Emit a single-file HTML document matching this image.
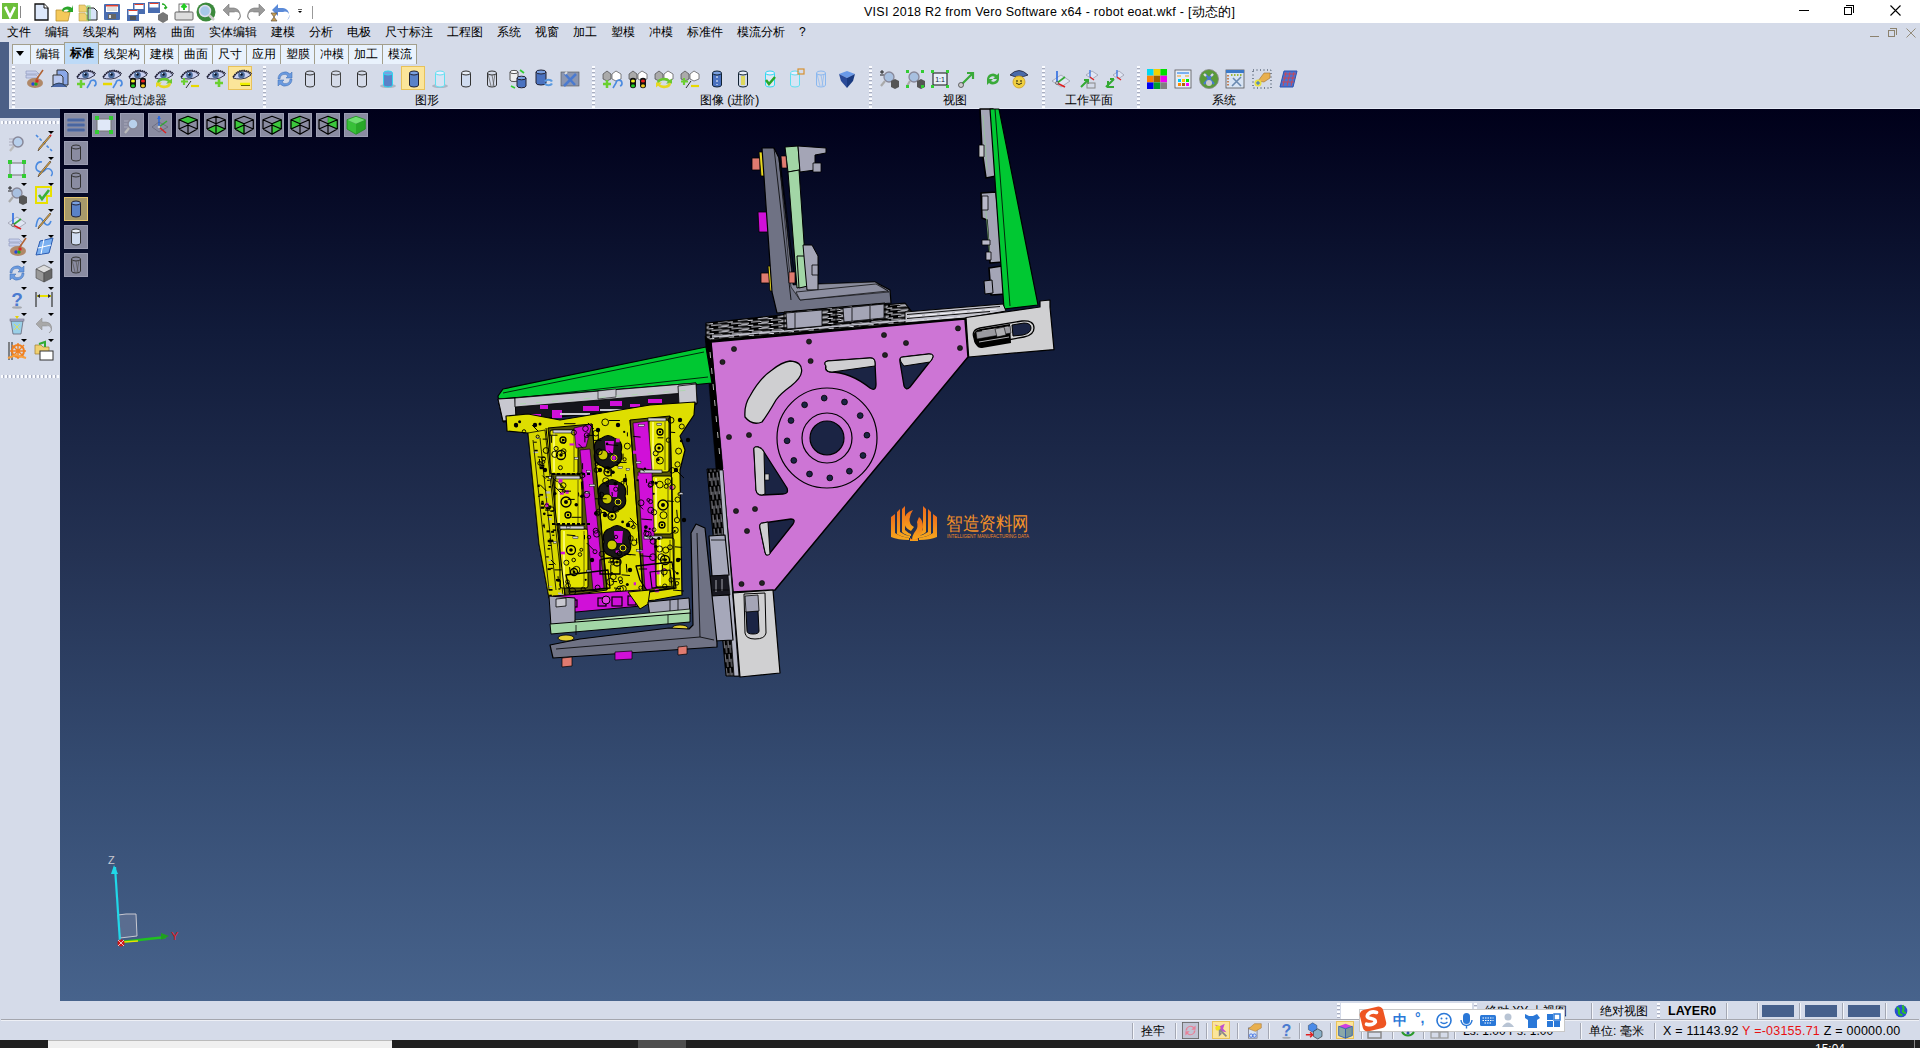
<!DOCTYPE html><html><head><meta charset="utf-8"><style>
*{margin:0;padding:0;box-sizing:border-box}
html,body{width:1920px;height:1048px;overflow:hidden;background:#d5dbe9;font-family:"Liberation Sans",sans-serif;font-size:12px;color:#000}
.a{position:absolute;overflow:visible}
.t{position:absolute;white-space:nowrap;line-height:1;font-weight:500}
.tab{position:absolute;top:44px;height:20px;border:1px solid #a39f8c;border-bottom:none;background:#e9f2fd;font-size:12px;line-height:18px;text-align:center;white-space:nowrap;font-weight:500}
.tab.act{top:42px;height:22px;background:#bddaf7;line-height:20px;font-weight:bold}
.vsep{position:absolute;width:3px;background:repeating-linear-gradient(#fbfcff 0 2px,#a9aec0 2px 3px,#d6dcea 3px 4px)}
.hsep{position:absolute;height:3px;background:repeating-linear-gradient(90deg,#fbfcff 0 2px,#a9aec0 2px 3px,#d6dcea 3px 4px)}
.btn{position:absolute;width:24px;height:24px;background:#8a8ca1;border:1px solid #9c9eb3}
.sl{position:absolute;width:2px;background:#a4a8b4;border-right:1px solid #f4f6fb}
</style></head><body>
<div class="a" style="left:0;top:0;width:1920px;height:23px;background:#fff"></div>
<svg class="a" style="left:2px;top:3px" width="16" height="16" viewBox="0 0 20 20"><rect x="0" y="0" width="20" height="20" fill="#6cbf3a"/><path d="M4 5l6 12 6-12" stroke="#fff" stroke-width="3.4" fill="none"/><circle cx="5" cy="6" r="1.6" fill="#fff"/></svg>
<div class="a" style="left:20px;top:6px;width:1px;height:12px;background:#888"></div>
<svg class="a" style="left:31px;top:2px" width="20" height="20" viewBox="0 0 20 20"><path d="M4 2h9l4 4v12H4z" fill="#dde8fb" stroke="#111" stroke-width="1.3"/><path d="M13 2v4h4" fill="#fff" stroke="#111"/></svg>
<svg class="a" style="left:54px;top:2px" width="20" height="20" viewBox="0 0 20 20"><path d="M2 8h6l2 2h6l-2 9H2z" fill="#f5c95a" stroke="#b89030" stroke-width=".8"/><path d="M8 8a6 5 0 0 1 10-2l1-3v7h-6l2-2a4 3 0 0 0-6 2z" fill="#2aa52a"/></svg>
<svg class="a" style="left:78px;top:2px" width="20" height="20" viewBox="0 0 20 20"><path d="M1 3h6l1 2h3v5H1z" fill="#f0d070" stroke="#b8a050" stroke-width=".6"/><path d="M1 11h6l1 2h3v6H1z" fill="#f0d070" stroke="#b8a050" stroke-width=".6"/><path d="M10 6h6l3 3v9H10z" fill="#d8e4f8" stroke="#222" stroke-width="1"/><rect x="9" y="4" width="3" height="14" fill="none" stroke="#6c6" stroke-width=".8"/></svg>
<svg class="a" style="left:102px;top:2px" width="20" height="20" viewBox="0 0 20 20"><rect x="2" y="2" width="16" height="16" rx="1" fill="#4a6db0"/><rect x="4" y="3" width="12" height="7" fill="#fff"/><rect x="4" y="3" width="12" height="1.5" fill="#e04030"/><path d="M5 6h10M5 8h10" stroke="#999" stroke-width=".6"/><rect x="6" y="12" width="8" height="5" fill="#666"/><rect x="7" y="13" width="2" height="3" fill="#ddd"/></svg>
<svg class="a" style="left:126px;top:2px" width="20" height="20" viewBox="0 0 20 20"><rect x="7" y="1" width="12" height="11" fill="#4a6db0"/><rect x="8.5" y="2" width="9" height="5" fill="#fff"/><rect x="1" y="7" width="12" height="12" fill="#4a6db0"/><rect x="2.5" y="8" width="9" height="5" fill="#fff"/><rect x="8.5" y="2" width="9" height="1" fill="#e04030"/><rect x="2.5" y="8" width="9" height="1" fill="#e04030"/><rect x="4" y="14" width="6" height="4" fill="#555"/></svg>
<svg class="a" style="left:148px;top:2px" width="20" height="20" viewBox="0 0 20 20"><rect x="0" y="0" width="12" height="11" fill="#4a6db0"/><rect x="1.5" y="1" width="9" height="4.5" fill="#fff"/><rect x="1.5" y="1" width="9" height="1" fill="#e04030"/><path d="M10 13l5-3 5 3v5l-5 3-5-3z" fill="#777"/><path d="M14 2a4 4 0 0 1 4 4l1-1M18 6l-2 0" stroke="#2a2" stroke-width="1.5" fill="none"/></svg>
<svg class="a" style="left:174px;top:2px" width="20" height="20" viewBox="0 0 20 20"><rect x="5" y="2" width="10" height="8" fill="#fff" stroke="#555" stroke-width=".8"/><path d="M10 3v5M7.5 5.5l2.5-3 2.5 3" stroke="#2c2" stroke-width="2" fill="none"/><rect x="1" y="10" width="18" height="8" rx="1" fill="#ddd" stroke="#666" stroke-width="1"/></svg>
<svg class="a" style="left:196px;top:2px" width="20" height="20" viewBox="0 0 20 20"><circle cx="10" cy="10" r="9.5" fill="#3c8a3c"/><circle cx="9" cy="9" r="5.5" fill="#a8c8e8" stroke="#dde" stroke-width="1.5"/><path d="M13 13l5 5" stroke="#ccc" stroke-width="2.5"/></svg>
<svg class="a" style="left:222px;top:2px" width="20" height="20" viewBox="0 0 20 20"><path d="M16 18a7 7 0 0 0-4-12H7V2L1 8l6 6v-4h5a4 4 0 0 1 4 8" fill="#9a9a9a" stroke="#777" stroke-width=".6"/></svg>
<svg class="a" style="left:246px;top:2px" width="20" height="20" viewBox="0 0 20 20"><path d="M4 18a7 7 0 0 1 4-12h5V2l6 6-6 6v-4H8a4 4 0 0 0-4 8" fill="#9a9a9a" stroke="#777" stroke-width=".6"/></svg>
<svg class="a" style="left:269px;top:2px" width="20" height="20" viewBox="0 0 20 20"><path d="M18 18a7 7 0 0 0-4-12H9V2L3 8l6 6v-4h5a4 4 0 0 1 4 8" fill="#5a8ad8"/><path d="M2 11h6l-3 4 3 4H2l3-4z" fill="#c8a050" stroke="#654" stroke-width=".7"/></svg>
<svg class="a" style="left:295px;top:3px" width="10" height="16" viewBox="0 0 20 20"><path d="M6 7h8" stroke="#000" stroke-width="1.2"/><path d="M6 10h8l-4 4z" fill="#000"/></svg>
<div class="a" style="left:312px;top:6px;width:1px;height:13px;background:#999"></div>
<div class="t title" style="left:864px;top:6px;font-size:12.5px;color:#000;letter-spacing:0.27px">VISI 2018 R2 from Vero Software x64 - robot eoat.wkf - [动态的]</div>
<div class="a" style="left:1799px;top:10px;width:10px;height:1px;background:#000"></div>
<div class="a" style="left:1844px;top:7px;width:8px;height:8px;border:1px solid #000"></div>
<div class="a" style="left:1846px;top:5px;width:8px;height:8px;border-top:1px solid #000;border-right:1px solid #000"></div>
<svg class="a" style="left:1890px;top:5px" width="11" height="11" viewBox="0 0 11 11"><path d="M0.5 0.5l10 10M10.5 0.5l-10 10" stroke="#000" stroke-width="1.1"/></svg>
<div class="a" style="left:0;top:23px;width:1920px;height:86px;background:#d5dbe9"></div>
<div class="t" style="left:7px;top:26px;font-size:12px;color:#000">文件</div>
<div class="t" style="left:45px;top:26px;font-size:12px;color:#000">编辑</div>
<div class="t" style="left:83px;top:26px;font-size:12px;color:#000">线架构</div>
<div class="t" style="left:133px;top:26px;font-size:12px;color:#000">网格</div>
<div class="t" style="left:171px;top:26px;font-size:12px;color:#000">曲面</div>
<div class="t" style="left:209px;top:26px;font-size:12px;color:#000">实体编辑</div>
<div class="t" style="left:271px;top:26px;font-size:12px;color:#000">建模</div>
<div class="t" style="left:309px;top:26px;font-size:12px;color:#000">分析</div>
<div class="t" style="left:347px;top:26px;font-size:12px;color:#000">电极</div>
<div class="t" style="left:385px;top:26px;font-size:12px;color:#000">尺寸标注</div>
<div class="t" style="left:447px;top:26px;font-size:12px;color:#000">工程图</div>
<div class="t" style="left:497px;top:26px;font-size:12px;color:#000">系统</div>
<div class="t" style="left:535px;top:26px;font-size:12px;color:#000">视窗</div>
<div class="t" style="left:573px;top:26px;font-size:12px;color:#000">加工</div>
<div class="t" style="left:611px;top:26px;font-size:12px;color:#000">塑模</div>
<div class="t" style="left:649px;top:26px;font-size:12px;color:#000">冲模</div>
<div class="t" style="left:687px;top:26px;font-size:12px;color:#000">标准件</div>
<div class="t" style="left:737px;top:26px;font-size:12px;color:#000">模流分析</div>
<div class="t" style="left:799px;top:26px;font-size:12px;color:#000">?</div>
<div class="a" style="left:1870px;top:36px;width:9px;height:1px;background:#8c826e"></div>
<div class="a" style="left:1888px;top:30px;width:7px;height:7px;border:1px solid #8c826e"></div>
<div class="a" style="left:1890px;top:28px;width:7px;height:7px;border-top:1px solid #8c826e;border-right:1px solid #8c826e"></div>
<svg class="a" style="left:1906px;top:28px" width="10" height="10" viewBox="0 0 10 10"><path d="M0.5 0.5l9 9M9.5 0.5l-9 9" stroke="#8c826e" stroke-width=".9"/></svg>
<div class="a" style="left:0;top:42px;width:9px;height:76px;background:#4b5f86"></div>
<div class="a" style="left:0;top:108px;width:60px;height:10px;background:#4b5f86"></div>
<div class="tab" style="left:12px;width:19px"></div>
<div class="tab" style="left:30px;width:35px">编辑</div>
<div class="tab act" style="left:64px;width:35px">标准</div>
<div class="tab" style="left:98px;width:47px">线架构</div>
<div class="tab" style="left:144px;width:35px">建模</div>
<div class="tab" style="left:178px;width:35px">曲面</div>
<div class="tab" style="left:212px;width:35px">尺寸</div>
<div class="tab" style="left:246px;width:35px">应用</div>
<div class="tab" style="left:280px;width:35px">塑膜</div>
<div class="tab" style="left:314px;width:35px">冲模</div>
<div class="tab" style="left:348px;width:35px">加工</div>
<div class="tab" style="left:382px;width:35px">模流</div>
<svg class="a" style="left:15px;top:50px" width="10" height="8" viewBox="0 0 10 8"><path d="M1 1h8L5 6z" fill="#000"/></svg>
<div class="a" style="left:9px;top:64px;width:1911px;height:44px;background:#d5dbe9"></div>
<div class="a" style="left:9px;top:108px;width:1911px;height:1px;background:#e6ebf7"></div>
<div class="vsep" style="left:12px;top:66px;height:42px"></div>
<div class="vsep" style="left:263px;top:66px;height:42px"></div>
<div class="vsep" style="left:592px;top:66px;height:42px"></div>
<div class="vsep" style="left:869px;top:66px;height:42px"></div>
<div class="vsep" style="left:1042px;top:66px;height:42px"></div>
<div class="vsep" style="left:1137px;top:66px;height:42px"></div>
<div class="a" style="left:228px;top:66px;width:24px;height:24px;background:#fbe59a;border:1px solid #e8c25a"></div>
<div class="a" style="left:401px;top:66px;width:24px;height:24px;background:#fbe59a;border:1px solid #e8c25a"></div>
<svg class="a" style="left:24px;top:69px" width="20" height="20" viewBox="0 0 20 20"><path d="M2 2h10l3 3H2zM2 6h10l3 3H2z" fill="#c8d0ec" stroke="#8890b8" stroke-width=".6"/><ellipse cx="11" cy="14" rx="8" ry="5" fill="#b08868"/><circle cx="9" cy="15" r="1.7" fill="#2244dd"/><circle cx="12" cy="15" r="1.7" fill="#22aa22"/><circle cx="13" cy="12" r="1.7" fill="#dd2222"/><path d="M19 1l-7 10" stroke="#b06030" stroke-width="1.5"/></svg>
<svg class="a" style="left:50px;top:69px" width="20" height="20" viewBox="0 0 20 20"><path d="M7 1h8l3 3v12H7z" fill="#8aa8e8" stroke="#333" stroke-width="1"/><path d="M3 6h8l2 2v8H3z" fill="#b8c8f0" stroke="#333" stroke-width="1"/><path d="M1 18q8-8 16 0" fill="#4a68a8" stroke="#234" stroke-width=".8"/></svg>
<svg class="a" style="left:76px;top:69px" width="20" height="20" viewBox="0 0 20 20"><path d="M1 9Q5 2 11 2Q16 2 19 6Q14 10 9 10Q4 10 1 9Z" fill="#c8d0f0" stroke="#2a2a40" stroke-width=".9"/><circle cx="9.5" cy="6" r="3.3" fill="#4a6a9a"/><circle cx="9.5" cy="5.5" r="1.2" fill="#0a1020"/><circle cx="8.5" cy="4.5" r=".7" fill="#cde"/><path d="M1 8Q6 1 12 1.5Q17 2 19.5 5" stroke="#1a1a30" stroke-width="1.6" fill="none" stroke-dasharray="1.5 .6"/></svg>
<svg class="a" style="left:76px;top:69px" width="20" height="20" viewBox="0 0 20 20"><path d="M5 11v8M1 15h8" stroke="#6ad030" stroke-width="2.5"/></svg>
<svg class="a" style="left:76px;top:69px" width="20" height="20" viewBox="0 0 20 20"><path d="M11 19l3-5a3 3 0 1 1 4 3" stroke="#4a8ae0" stroke-width="1.6" fill="none"/></svg>
<svg class="a" style="left:102px;top:69px" width="20" height="20" viewBox="0 0 20 20"><path d="M1 9Q5 2 11 2Q16 2 19 6Q14 10 9 10Q4 10 1 9Z" fill="#c8d0f0" stroke="#2a2a40" stroke-width=".9"/><circle cx="9.5" cy="6" r="3.3" fill="#4a6a9a"/><circle cx="9.5" cy="5.5" r="1.2" fill="#0a1020"/><circle cx="8.5" cy="4.5" r=".7" fill="#cde"/><path d="M1 8Q6 1 12 1.5Q17 2 19.5 5" stroke="#1a1a30" stroke-width="1.6" fill="none" stroke-dasharray="1.5 .6"/></svg>
<svg class="a" style="left:102px;top:69px" width="20" height="20" viewBox="0 0 20 20"><path d="M1 15h9" stroke="#e8d800" stroke-width="2.5"/></svg>
<svg class="a" style="left:102px;top:69px" width="20" height="20" viewBox="0 0 20 20"><path d="M11 19l3-5a3 3 0 1 1 4 3" stroke="#4a8ae0" stroke-width="1.6" fill="none"/></svg>
<svg class="a" style="left:128px;top:69px" width="20" height="20" viewBox="0 0 20 20"><path d="M1 9Q5 2 11 2Q16 2 19 6Q14 10 9 10Q4 10 1 9Z" fill="#c8d0f0" stroke="#2a2a40" stroke-width=".9"/><circle cx="9.5" cy="6" r="3.3" fill="#4a6a9a"/><circle cx="9.5" cy="5.5" r="1.2" fill="#0a1020"/><circle cx="8.5" cy="4.5" r=".7" fill="#cde"/><path d="M1 8Q6 1 12 1.5Q17 2 19.5 5" stroke="#1a1a30" stroke-width="1.6" fill="none" stroke-dasharray="1.5 .6"/></svg>
<svg class="a" style="left:128px;top:69px" width="20" height="20" viewBox="0 0 20 20"><g transform="translate(0,4) scale(1,.8)"><rect x="2" y="6" width="6" height="13" rx="3" fill="#111"/><circle cx="5" cy="10" r="2" fill="#ee2"/><circle cx="5" cy="16" r="2" fill="#2c2"/><rect x="12" y="6" width="6" height="13" rx="3" fill="#111"/><circle cx="15" cy="10" r="2" fill="#e22"/><circle cx="15" cy="16" r="2" fill="#ec2"/></g></svg>
<svg class="a" style="left:154px;top:69px" width="20" height="20" viewBox="0 0 20 20"><path d="M1 9Q5 2 11 2Q16 2 19 6Q14 10 9 10Q4 10 1 9Z" fill="#c8d0f0" stroke="#2a2a40" stroke-width=".9"/><circle cx="9.5" cy="6" r="3.3" fill="#4a6a9a"/><circle cx="9.5" cy="5.5" r="1.2" fill="#0a1020"/><circle cx="8.5" cy="4.5" r=".7" fill="#cde"/><path d="M1 8Q6 1 12 1.5Q17 2 19.5 5" stroke="#1a1a30" stroke-width="1.6" fill="none" stroke-dasharray="1.5 .6"/></svg>
<svg class="a" style="left:154px;top:69px" width="20" height="20" viewBox="0 0 20 20"><g transform="translate(0,4) scale(1,.8)"><path d="M3 12a7 6 0 0 1 13-3l2-2v6h-6l2-2a5 4 0 0 0-9 2z" fill="#6ac830"/><path d="M17 13a7 6 0 0 1-13 3l-2 2v-6h6l-2 2a5 4 0 0 0 9-2z" fill="#e8d820"/></g></svg>
<svg class="a" style="left:180px;top:69px" width="20" height="20" viewBox="0 0 20 20"><path d="M1 9Q5 2 11 2Q16 2 19 6Q14 10 9 10Q4 10 1 9Z" fill="#c8d0f0" stroke="#2a2a40" stroke-width=".9"/><circle cx="9.5" cy="6" r="3.3" fill="#4a6a9a"/><circle cx="9.5" cy="5.5" r="1.2" fill="#0a1020"/><circle cx="8.5" cy="4.5" r=".7" fill="#cde"/><path d="M1 8Q6 1 12 1.5Q17 2 19.5 5" stroke="#1a1a30" stroke-width="1.6" fill="none" stroke-dasharray="1.5 .6"/></svg>
<svg class="a" style="left:180px;top:69px" width="20" height="20" viewBox="0 0 20 20"><path d="M4 9v7M1 12.5h7" stroke="#6ad030" stroke-width="2.2"/><path d="M6 19l5-7" stroke="#333" stroke-width="1"/><path d="M11 17h8" stroke="#e8d800" stroke-width="2.2"/></svg>
<svg class="a" style="left:206px;top:69px" width="20" height="20" viewBox="0 0 20 20"><path d="M1 9Q5 2 11 2Q16 2 19 6Q14 10 9 10Q4 10 1 9Z" fill="#c8d0f0" stroke="#2a2a40" stroke-width=".9"/><circle cx="9.5" cy="6" r="3.3" fill="#4a6a9a"/><circle cx="9.5" cy="5.5" r="1.2" fill="#0a1020"/><circle cx="8.5" cy="4.5" r=".7" fill="#cde"/><path d="M1 8Q6 1 12 1.5Q17 2 19.5 5" stroke="#1a1a30" stroke-width="1.6" fill="none" stroke-dasharray="1.5 .6"/></svg>
<svg class="a" style="left:206px;top:69px" width="20" height="20" viewBox="0 0 20 20"><path d="M13 10v8M9 14h8" stroke="#6ad030" stroke-width="2.6"/></svg>
<svg class="a" style="left:232px;top:69px" width="20" height="20" viewBox="0 0 20 20"><path d="M1 9Q5 2 11 2Q16 2 19 6Q14 10 9 10Q4 10 1 9Z" fill="#c8d0f0" stroke="#2a2a40" stroke-width=".9"/><circle cx="9.5" cy="6" r="3.3" fill="#4a6a9a"/><circle cx="9.5" cy="5.5" r="1.2" fill="#0a1020"/><circle cx="8.5" cy="4.5" r=".7" fill="#cde"/><path d="M1 8Q6 1 12 1.5Q17 2 19.5 5" stroke="#1a1a30" stroke-width="1.6" fill="none" stroke-dasharray="1.5 .6"/></svg>
<svg class="a" style="left:232px;top:69px" width="20" height="20" viewBox="0 0 20 20"><path d="M8 15h10" stroke="#f0f000" stroke-width="2.6"/><path d="M9 16.5h9" stroke="#6a6a00" stroke-width="1"/></svg>
<svg class="a" style="left:275px;top:69px" width="20" height="20" viewBox="0 0 20 20"><path d="M3 10a7 7 0 0 1 12-5l2-2v6h-6l2-2a4.5 4.5 0 0 0-8 3z" fill="#6a9ae0" stroke="#3a6ab0" stroke-width=".5"/><path d="M17 10a7 7 0 0 1-12 5l-2 2v-6h6l-2 2a4.5 4.5 0 0 0 8-3z" fill="#6a9ae0" stroke="#3a6ab0" stroke-width=".5"/></svg>
<svg class="a" style="left:300px;top:69px" width="20" height="20" viewBox="0 0 20 20"><path d="M5.5 4v12a4.5 2 0 0 0 9 0V4" fill="none" stroke="#333" stroke-width="1"/><ellipse cx="10" cy="4" rx="4.5" ry="2" fill="none" stroke="#333" stroke-width="1"/></svg>
<svg class="a" style="left:326px;top:69px" width="20" height="20" viewBox="0 0 20 20"><path d="M5.5 4v12a4.5 2 0 0 0 9 0V4" fill="none" stroke="#444" stroke-width="1"/><ellipse cx="10" cy="4" rx="4.5" ry="2" fill="none" stroke="#444" stroke-width="1"/></svg>
<svg class="a" style="left:352px;top:69px" width="20" height="20" viewBox="0 0 20 20"><path d="M5.5 4v12a4.5 2 0 0 0 9 0V4" fill="none" stroke="#333" stroke-width="1"/><ellipse cx="10" cy="4" rx="4.5" ry="2" fill="none" stroke="#333" stroke-width="1"/></svg>
<svg class="a" style="left:378px;top:69px" width="20" height="20" viewBox="0 0 20 20"><ellipse cx="10" cy="17" rx="8" ry="2" fill="#8890a0" opacity=".5"/><path d="M5.5 4v12a4.5 2 0 0 0 9 0V4" fill="#5a82c8" stroke="#30d8f0" stroke-width="1"/><ellipse cx="10" cy="4" rx="4.5" ry="2" fill="#7aa0e0" stroke="#30d8f0" stroke-width="1"/></svg>
<svg class="a" style="left:404px;top:69px" width="20" height="20" viewBox="0 0 20 20"><path d="M5.5 4v12a4.5 2 0 0 0 9 0V4" fill="#5a82c8" stroke="#223" stroke-width="1"/><ellipse cx="10" cy="4" rx="4.5" ry="2" fill="#7aa0e0" stroke="#223" stroke-width="1"/></svg>
<svg class="a" style="left:430px;top:69px" width="20" height="20" viewBox="0 0 20 20"><ellipse cx="10" cy="17" rx="8" ry="2" fill="#8890a0" opacity=".5"/><path d="M5.5 4v12a4.5 2 0 0 0 9 0V4" fill="#d8e4f4" stroke="#60e0f0" stroke-width="1"/><ellipse cx="10" cy="4" rx="4.5" ry="2" fill="#eef" stroke="#60e0f0" stroke-width="1"/></svg>
<svg class="a" style="left:456px;top:69px" width="20" height="20" viewBox="0 0 20 20"><path d="M5.5 4v12a4.5 2 0 0 0 9 0V4" fill="#d0dcf0" stroke="#333" stroke-width="1"/><ellipse cx="10" cy="4" rx="4.5" ry="2" fill="#e8eef8" stroke="#333" stroke-width="1"/></svg>
<svg class="a" style="left:482px;top:69px" width="20" height="20" viewBox="0 0 20 20"><path d="M5.5 4v12a4.5 2 0 0 0 9 0V4" fill="none" stroke="#333" stroke-width="1"/><ellipse cx="10" cy="4" rx="4.5" ry="2" fill="none" stroke="#333" stroke-width="1"/><path d="M6 5l3 12M10 6l2 11M13 5l-2 12" stroke="#555" stroke-width=".7"/></svg>
<svg class="a" style="left:508px;top:69px" width="20" height="20" viewBox="0 0 20 20"><path d="M2 3v8a4 1.6 0 0 0 8 0V3" fill="#eee" stroke="#555"/><ellipse cx="6" cy="3" rx="4" ry="1.6" fill="#fff" stroke="#555"/><path d="M9 9v8a4.5 1.8 0 0 0 9 0V9" fill="#4a72c0" stroke="#223"/><ellipse cx="13.5" cy="9" rx="4.5" ry="1.8" fill="#7aa0e0" stroke="#223"/><path d="M12 1l4 3M3 17l4 2" stroke="#3c3" stroke-width="1.8"/></svg>
<svg class="a" style="left:534px;top:69px" width="20" height="20" viewBox="0 0 20 20"><path d="M2 3v11a5 2 0 0 0 10 0V3" fill="#4a72c0" stroke="#223"/><ellipse cx="7" cy="3" rx="5" ry="2" fill="#7aa0e0" stroke="#223"/><path d="M10 12a5 4 0 0 1 9 0l-2 1a3 3 0 0 0-5 0zM19 15a5 4 0 0 1-9 0l2-1a3 3 0 0 0 5 0z" fill="#5a9ae0"/></svg>
<svg class="a" style="left:560px;top:69px" width="20" height="20" viewBox="0 0 20 20"><rect x="1" y="3" width="18" height="14" fill="#8b96b0" stroke="#555" stroke-width=".6"/><path d="M4 17l12-12M15 16L5 5" stroke="#4a7ad0" stroke-width="2.5"/><path d="M5 5l2-2" stroke="#ddd" stroke-width="2"/></svg>
<svg class="a" style="left:602px;top:69px" width="20" height="20" viewBox="0 0 20 20"><path d="M1 5l4-3 4 3v5l-4 2-4-2z" fill="#aaa" stroke="#333" stroke-width=".6"/><path d="M10 5l4-3 5 3v5l-5 2-4-2z" fill="#fff" stroke="#333" stroke-width=".6"/></svg>
<svg class="a" style="left:602px;top:69px" width="20" height="20" viewBox="0 0 20 20"><path d="M5 11v8M1 15h8" stroke="#6ad030" stroke-width="2.5"/></svg>
<svg class="a" style="left:602px;top:69px" width="20" height="20" viewBox="0 0 20 20"><path d="M11 19l3-5a3 3 0 1 1 4 3" stroke="#4a8ae0" stroke-width="1.6" fill="none"/></svg>
<svg class="a" style="left:628px;top:69px" width="20" height="20" viewBox="0 0 20 20"><path d="M1 5l4-3 4 3v5l-4 2-4-2z" fill="#aaa" stroke="#333" stroke-width=".6"/><path d="M10 5l4-3 5 3v5l-5 2-4-2z" fill="#fff" stroke="#333" stroke-width=".6"/></svg>
<svg class="a" style="left:628px;top:69px" width="20" height="20" viewBox="0 0 20 20"><g transform="translate(0,4) scale(1,.8)"><rect x="2" y="6" width="6" height="13" rx="3" fill="#111"/><circle cx="5" cy="10" r="2" fill="#ee2"/><circle cx="5" cy="16" r="2" fill="#2c2"/><rect x="12" y="6" width="6" height="13" rx="3" fill="#111"/><circle cx="15" cy="10" r="2" fill="#e22"/><circle cx="15" cy="16" r="2" fill="#ec2"/></g></svg>
<svg class="a" style="left:654px;top:69px" width="20" height="20" viewBox="0 0 20 20"><path d="M1 5l4-3 4 3v5l-4 2-4-2z" fill="#aaa" stroke="#333" stroke-width=".6"/><path d="M10 5l4-3 5 3v5l-5 2-4-2z" fill="#fff" stroke="#333" stroke-width=".6"/></svg>
<svg class="a" style="left:654px;top:69px" width="20" height="20" viewBox="0 0 20 20"><g transform="translate(0,4) scale(1,.8)"><path d="M3 12a7 6 0 0 1 13-3l2-2v6h-6l2-2a5 4 0 0 0-9 2z" fill="#6ac830"/><path d="M17 13a7 6 0 0 1-13 3l-2 2v-6h6l-2 2a5 4 0 0 0 9-2z" fill="#e8d820"/></g></svg>
<svg class="a" style="left:680px;top:69px" width="20" height="20" viewBox="0 0 20 20"><path d="M1 5l4-3 4 3v5l-4 2-4-2z" fill="#aaa" stroke="#333" stroke-width=".6"/><path d="M10 5l4-3 5 3v5l-5 2-4-2z" fill="#fff" stroke="#333" stroke-width=".6"/></svg>
<svg class="a" style="left:680px;top:69px" width="20" height="20" viewBox="0 0 20 20"><path d="M4 9v7M1 12.5h7" stroke="#6ad030" stroke-width="2.2"/><path d="M6 19l5-7" stroke="#333" stroke-width="1"/><path d="M11 17h8" stroke="#e8d800" stroke-width="2.2"/></svg>
<svg class="a" style="left:707px;top:69px" width="20" height="20" viewBox="0 0 20 20"><path d="M5.5 4v12a4.5 2 0 0 0 9 0V4" fill="#4a72c0" stroke="#123" stroke-width="1"/><ellipse cx="10" cy="4" rx="4.5" ry="2" fill="#7aa0e0" stroke="#123" stroke-width="1"/><path d="M10 7v9" stroke="#fff" stroke-width="1" stroke-dasharray="2 2"/></svg>
<svg class="a" style="left:733px;top:69px" width="20" height="20" viewBox="0 0 20 20"><path d="M5.5 4v12a4.5 2 0 0 0 9 0V4" fill="#d0d8e8" stroke="#123" stroke-width="1"/><ellipse cx="10" cy="4" rx="4.5" ry="2" fill="#e8eef8" stroke="#123" stroke-width="1"/><path d="M9 7v9M11 7v9" stroke="#e8d800" stroke-width="1.2"/></svg>
<svg class="a" style="left:760px;top:69px" width="20" height="20" viewBox="0 0 20 20"><path d="M5.5 4v12a4.5 2 0 0 0 9 0V4" fill="#e0e8f4" stroke="#30d8f0" stroke-width="1"/><ellipse cx="10" cy="4" rx="4.5" ry="2" fill="#eef" stroke="#30d8f0" stroke-width="1"/><path d="M6 11l3 4 6-7" stroke="#2aa82a" stroke-width="2.5" fill="none"/></svg>
<svg class="a" style="left:785px;top:69px" width="20" height="20" viewBox="0 0 20 20"><path d="M5.5 4v12a4.5 2 0 0 0 9 0V4" fill="#d8e4f4" stroke="#60e0f0" stroke-width="1"/><ellipse cx="10" cy="4" rx="4.5" ry="2" fill="#eef" stroke="#60e0f0" stroke-width="1"/><rect x="13" y="0" width="6" height="5" fill="none" stroke="#d89030" stroke-width="1.2"/></svg>
<svg class="a" style="left:811px;top:69px" width="20" height="20" viewBox="0 0 20 20"><path d="M5.5 4v12a4.5 2 0 0 0 9 0V4" fill="none" stroke="#8ab8f0" stroke-width="1"/><ellipse cx="10" cy="4" rx="4.5" ry="2" fill="none" stroke="#8ab8f0" stroke-width="1"/><path d="M6 5l3 12M10 6l2 11M13 5l-2 12" stroke="#8ab8f0" stroke-width=".7"/></svg>
<svg class="a" style="left:837px;top:69px" width="20" height="20" viewBox="0 0 20 20"><path d="M2 5l8-3 8 3-8 4z" fill="#6a9ae8"/><path d="M2 5l8 4v10L4 12z" fill="#2a4a98"/><path d="M18 5l-8 4v10l6-7z" fill="#1a3a80"/></svg>
<svg class="a" style="left:879px;top:69px" width="20" height="20" viewBox="0 0 20 20"><path d="M1 3h4M3 1v4M1 6h4" stroke="#111" stroke-width=".9"/><circle cx="10" cy="8" r="5" fill="#a8c0e0" stroke="#889" stroke-width="1.3"/><path d="M6 12l-4 5" stroke="#aaa" stroke-width="2.2"/><path d="M12 12l4-2 4 2v6l-4 2-4-2z" fill="#555"/></svg>
<svg class="a" style="left:905px;top:69px" width="20" height="20" viewBox="0 0 20 20"><circle cx="9" cy="8" r="5" fill="#a8c0e0" stroke="#889" stroke-width="1.3"/><path d="M5 12l-3 5" stroke="#aaa" stroke-width="2.2"/><path d="M12 12l4-2 4 2v6l-4 2-4-2z" fill="#555"/><path d="M1 1h3v3H1zM16 1h3v3h-3zM1 16h3v3H1zM16 16h3v3h-3z" fill="#3c3"/></svg>
<svg class="a" style="left:930px;top:69px" width="20" height="20" viewBox="0 0 20 20"><rect x="3" y="4" width="14" height="12" fill="#e8eef8" stroke="#111" stroke-width="1"/><text x="10" y="13" font-size="7" text-anchor="middle" fill="#123" font-family="Liberation Sans">1:1</text><path d="M1 1h3v3H1zM16 1h3v3h-3zM1 16h3v3H1zM16 16h3v3h-3z" fill="#3c3"/></svg>
<svg class="a" style="left:957px;top:69px" width="20" height="20" viewBox="0 0 20 20"><path d="M4 16l12-12M10 4h6v6" stroke="#3aaa3a" stroke-width="2.2" fill="none"/><circle cx="4" cy="16" r="2.5" fill="#ccc" stroke="#333" stroke-width=".7"/></svg>
<svg class="a" style="left:983px;top:69px" width="20" height="20" viewBox="0 0 20 20"><path d="M4 10a6 6 0 0 1 10-4l2-2v6h-6l2-2a4 4 0 0 0-6 2z" fill="#3aaa3a"/><path d="M16 10a6 6 0 0 1-10 4l-2 2v-6h6l-2 2a4 4 0 0 0 6-2z" fill="#3aaa3a"/></svg>
<svg class="a" style="left:1009px;top:69px" width="20" height="20" viewBox="0 0 20 20"><path d="M1 6q9-9 18 0q-9 4-18 0z" fill="#4a6aa8" stroke="#223" stroke-width=".8"/><circle cx="10" cy="13" r="6" fill="#f0d040" stroke="#d0a020" stroke-width=".8"/><circle cx="8" cy="12" r=".8"/><circle cx="12" cy="12" r=".8"/><path d="M7 14q3 3 6 0" stroke="#000" stroke-width=".8" fill="none"/></svg>
<svg class="a" style="left:1051px;top:69px" width="20" height="20" viewBox="0 0 20 20"><path d="M1 12l9-6 9 6-9 6z" fill="#e0e6f4" stroke="#889" stroke-width=".6"/><path d="M6 14V2" stroke="#2a6ae0" stroke-width="1.6"/><path d="M6 14l8-6" stroke="#3a3" stroke-width="1.6"/><path d="M6 14l8 4" stroke="#d22" stroke-width="1.6"/><circle cx="6" cy="14" r="1.5" fill="#ccc" stroke="#333" stroke-width=".5"/></svg>
<svg class="a" style="left:1078px;top:69px" width="20" height="20" viewBox="0 0 20 20"><path d="M8 6l6-4 6 4-6 4z" fill="#e0e6f4" stroke="#889" stroke-width=".6"/><path d="M12 8V1" stroke="#2a6ae0" stroke-width="1.2"/><path d="M12 8l4 3" stroke="#d22" stroke-width="1.2"/><path d="M3 18l7-7M6 11h4v4" stroke="#3a3" stroke-width="2" fill="none"/><rect x="9" y="14" width="8" height="5" fill="none" stroke="#888" stroke-width="1"/></svg>
<svg class="a" style="left:1104px;top:69px" width="20" height="20" viewBox="0 0 20 20"><path d="M9 6l6-4 5 4-6 4z" fill="#e0e6f4" stroke="#889" stroke-width=".6"/><path d="M13 8V1" stroke="#2a6ae0" stroke-width="1.2"/><path d="M13 8l4 3" stroke="#d22" stroke-width="1.2"/><path d="M2 18l8-8M4 12v6h6M10 10h-4" stroke="#3a3" stroke-width="2" fill="none"/></svg>
<svg class="a" style="left:1147px;top:69px" width="20" height="20" viewBox="0 0 20 20"><rect x="0" y="0" width="6.6" height="6.6" fill="#00d8f0"/><rect x="6.7" y="0" width="6.6" height="6.6" fill="#f0d000"/><rect x="13.4" y="0" width="6.6" height="6.6" fill="#00e000"/><rect x="0" y="6.7" width="6.6" height="6.6" fill="#ff8000"/><rect x="6.7" y="6.7" width="6.6" height="6.6" fill="#a06000"/><rect x="13.4" y="6.7" width="6.6" height="6.6" fill="#f000f0"/><rect x="0" y="13.4" width="6.6" height="6.6" fill="#0000f0"/><rect x="6.7" y="13.4" width="6.6" height="6.6" fill="#00a030"/><rect x="13.4" y="13.4" width="6.6" height="6.6" fill="#808080"/></svg>
<svg class="a" style="left:1173px;top:69px" width="20" height="20" viewBox="0 0 20 20"><rect x="2" y="1" width="16" height="18" fill="#e8eef8" stroke="#555" stroke-width=".8"/><rect x="4" y="3" width="12" height="2" fill="#7ab0f0"/><path d="M4 7h4M12 7h4" stroke="#f0a020" stroke-width="1"/><rect x="5" y="10" width="3" height="3" fill="#0cf"/><rect x="9" y="10" width="3" height="3" fill="#fc0"/><rect x="13" y="10" width="3" height="3" fill="#0e0"/><rect x="5" y="14" width="3" height="3" fill="#f80"/><rect x="9" y="14" width="3" height="3" fill="#a60"/><rect x="13" y="14" width="3" height="3" fill="#f0f"/></svg>
<svg class="a" style="left:1199px;top:69px" width="20" height="20" viewBox="0 0 20 20"><circle cx="10" cy="10" r="9.5" fill="#5a9a3a" stroke="#888" stroke-width=".8"/><path d="M5 15l9-10M6 5l9 10" stroke="#4a7ad0" stroke-width="2.2"/><path d="M5 5l2 2M14 5l-2 2" stroke="#ddd" stroke-width="2.2"/><ellipse cx="10" cy="14" rx="3" ry="3" fill="#ccc"/></svg>
<svg class="a" style="left:1225px;top:69px" width="20" height="20" viewBox="0 0 20 20"><rect x="1" y="1" width="18" height="18" fill="#d8e4f4" stroke="#555" stroke-width=".8"/><rect x="1" y="1" width="18" height="3" fill="#3a78c8"/><path d="M3 6v12" stroke="#c06020" stroke-width="1.5" stroke-dasharray="1.5 1.5"/><path d="M6 6h12" stroke="#8a0" stroke-width="1.5" stroke-dasharray="1.5 1.5"/><path d="M7 17l9-9M8 9l8 8" stroke="#6a8ab0" stroke-width="1.6"/></svg>
<svg class="a" style="left:1252px;top:69px" width="20" height="20" viewBox="0 0 20 20"><path d="M1 1h18v18H1z" fill="none" stroke="#234" stroke-width="1" stroke-dasharray="1 2.5"/><path d="M6 12l6-8h6v5l-6 4z" fill="#e8b050" stroke="#a07030" stroke-width=".6"/><circle cx="6" cy="14" r="3.5" fill="#e8e040"/><path d="M6 12v4M4 14h4" stroke="#2a6ae0" stroke-width="1"/></svg>
<svg class="a" style="left:1278px;top:69px" width="20" height="20" viewBox="0 0 20 20"><path d="M2 18l4-16h13l-4 16z" fill="#4a72d0" stroke="#2a52b0" stroke-width="1"/><path d="M4 13h12M5 9h12M6 5h12M8 3l-3 14M12 3l-3 14M16 3l-3 14" stroke="#e04040" stroke-width=".8"/></svg>
<div class="t" style="left:104px;top:94px;font-size:12px;color:#000">属性/过滤器</div>
<div class="t" style="left:415px;top:94px;font-size:12px;color:#000">图形</div>
<div class="t" style="left:700px;top:94px;font-size:12px;color:#000">图像 (进阶)</div>
<div class="t" style="left:943px;top:94px;font-size:12px;color:#000">视图</div>
<div class="t" style="left:1065px;top:94px;font-size:12px;color:#000">工作平面</div>
<div class="t" style="left:1212px;top:94px;font-size:12px;color:#000">系统</div>
<div class="a" style="left:0;top:118px;width:60px;height:883px;background:#d5dbe9"></div>
<div class="hsep" style="left:1px;top:121px;width:58px"></div>
<div class="hsep" style="left:1px;top:375px;width:58px"></div>
<svg class="a" style="left:7px;top:133px" width="20" height="20" viewBox="0 0 20 20"><path d="M2 6h5M2 9h5M2 12h5" stroke="#aab" stroke-width="1"/><circle cx="11" cy="9" r="5" fill="#b8d0ec" stroke="#889" stroke-width="1.5"/><path d="M7 13l-4 5" stroke="#bbb" stroke-width="2.2"/></svg>
<svg class="a" style="left:34px;top:133px" width="20" height="20" viewBox="0 0 20 20"><path d="M2 2l16 16" stroke="#4a8ae0" stroke-width="1.6" stroke-dasharray="3 2"/><path d="M17 3L6 16l-2 2 1-3L16 2z" fill="#e8b040" stroke="#543" stroke-width=".7"/><path d="M16 2l1 1" stroke="#d22" stroke-width="2"/></svg>
<svg class="a" style="left:48px;top:131px" width="6" height="4" viewBox="0 0 6 4"><path d="M0 0h6L3 3z" fill="#000"/></svg>
<svg class="a" style="left:7px;top:159px" width="20" height="20" viewBox="0 0 20 20"><rect x="3" y="4" width="14" height="12" fill="#e0e8f8" stroke="#777" stroke-width="1"/><path d="M1 1h4v4H1zM15 1h4v4h-4zM1 15h4v4H1zM15 15h4v4h-4z" fill="#3c3"/></svg>
<svg class="a" style="left:34px;top:159px" width="20" height="20" viewBox="0 0 20 20"><path d="M8 3a5 5 0 1 0 3 8a4 4 0 1 1 6 6" stroke="#4a8ae0" stroke-width="1.6" fill="none"/><path d="M17 3L6 16l-2 2 1-3L16 2z" fill="#e8b040" stroke="#543" stroke-width=".7"/></svg>
<svg class="a" style="left:48px;top:157px" width="6" height="4" viewBox="0 0 6 4"><path d="M0 0h6L3 3z" fill="#000"/></svg>
<svg class="a" style="left:7px;top:185px" width="20" height="20" viewBox="0 0 20 20"><path d="M1 3h4M3 1v4M1 6h4" stroke="#111" stroke-width=".9"/><circle cx="10" cy="8" r="5" fill="#a8c0e0" stroke="#889" stroke-width="1.3"/><path d="M6 12l-4 5" stroke="#aaa" stroke-width="2.2"/><path d="M12 12l4-2 4 2v6l-4 2-4-2z" fill="#555"/></svg>
<svg class="a" style="left:34px;top:185px" width="20" height="20" viewBox="0 0 20 20"><path d="M2 2h15v9h-4v7H2z" fill="none" stroke="#e8e000" stroke-width="2"/><path d="M5 10l3 4 7-9" stroke="#3ab03a" stroke-width="2.6" fill="none"/></svg>
<svg class="a" style="left:21px;top:183px" width="6" height="4" viewBox="0 0 6 4"><path d="M0 0h6L3 3z" fill="#000"/></svg>
<svg class="a" style="left:48px;top:183px" width="6" height="4" viewBox="0 0 6 4"><path d="M0 0h6L3 3z" fill="#000"/></svg>
<svg class="a" style="left:7px;top:211px" width="20" height="20" viewBox="0 0 20 20"><path d="M1 12l9-6 9 6-9 6z" fill="#e0e6f4" stroke="#889" stroke-width=".6"/><path d="M6 14V2" stroke="#2a6ae0" stroke-width="1.6"/><path d="M6 14l8-6" stroke="#3a3" stroke-width="1.6"/><path d="M6 14l8 4" stroke="#d22" stroke-width="1.6"/><circle cx="6" cy="14" r="1.5" fill="#ccc" stroke="#333" stroke-width=".5"/></svg>
<svg class="a" style="left:34px;top:211px" width="20" height="20" viewBox="0 0 20 20"><path d="M2 16q2-14 7-6t8 0" stroke="#4a8ae0" stroke-width="1.6" fill="none"/><path d="M17 3L6 16l-2 2 1-3L16 2z" fill="#e8b040" stroke="#543" stroke-width=".7"/></svg>
<svg class="a" style="left:21px;top:209px" width="6" height="4" viewBox="0 0 6 4"><path d="M0 0h6L3 3z" fill="#000"/></svg>
<svg class="a" style="left:48px;top:209px" width="6" height="4" viewBox="0 0 6 4"><path d="M0 0h6L3 3z" fill="#000"/></svg>
<svg class="a" style="left:7px;top:237px" width="20" height="20" viewBox="0 0 20 20"><path d="M2 2h10l3 3H2zM2 6h10l3 3H2z" fill="#c8d0ec" stroke="#8890b8" stroke-width=".6"/><ellipse cx="11" cy="14" rx="8" ry="5" fill="#b08868"/><circle cx="9" cy="15" r="1.7" fill="#2244dd"/><circle cx="12" cy="15" r="1.7" fill="#22aa22"/><circle cx="13" cy="12" r="1.7" fill="#dd2222"/><path d="M19 1l-7 10" stroke="#b06030" stroke-width="1.5"/></svg>
<svg class="a" style="left:34px;top:237px" width="20" height="20" viewBox="0 0 20 20"><path d="M2 18l4-14 13-3-4 15z" fill="#7ab0f0" stroke="#2a5ab0" stroke-width="1"/><path d="M4 11l13-3M10 2l-3 15" stroke="#fff" stroke-width="1"/></svg>
<svg class="a" style="left:21px;top:235px" width="6" height="4" viewBox="0 0 6 4"><path d="M0 0h6L3 3z" fill="#000"/></svg>
<svg class="a" style="left:48px;top:235px" width="6" height="4" viewBox="0 0 6 4"><path d="M0 0h6L3 3z" fill="#000"/></svg>
<svg class="a" style="left:7px;top:263px" width="20" height="20" viewBox="0 0 20 20"><path d="M3 10a7 7 0 0 1 12-5l2-2v6h-6l2-2a4.5 4.5 0 0 0-8 3z" fill="#6a9ae0" stroke="#3a6ab0" stroke-width=".5"/><path d="M17 10a7 7 0 0 1-12 5l-2 2v-6h6l-2 2a4.5 4.5 0 0 0 8-3z" fill="#6a9ae0" stroke="#3a6ab0" stroke-width=".5"/></svg>
<svg class="a" style="left:34px;top:263px" width="20" height="20" viewBox="0 0 20 20"><path d="M2 6l8-4 8 4-8 4z" fill="#ddd" stroke="#444" stroke-width=".6"/><path d="M2 6l8 4v9l-8-4z" fill="#999" stroke="#444" stroke-width=".6"/><path d="M18 6l-8 4v9l8-4z" fill="#666" stroke="#444" stroke-width=".6"/></svg>
<svg class="a" style="left:21px;top:261px" width="6" height="4" viewBox="0 0 6 4"><path d="M0 0h6L3 3z" fill="#000"/></svg>
<svg class="a" style="left:48px;top:261px" width="6" height="4" viewBox="0 0 6 4"><path d="M0 0h6L3 3z" fill="#000"/></svg>
<svg class="a" style="left:7px;top:289px" width="20" height="20" viewBox="0 0 20 20"><text x="10" y="17" font-size="19" font-weight="bold" text-anchor="middle" fill="#4a7ad0" font-family="Liberation Sans">?</text><ellipse cx="10" cy="18.5" rx="5" ry="1.2" fill="#888" opacity=".6"/></svg>
<svg class="a" style="left:34px;top:289px" width="20" height="20" viewBox="0 0 20 20"><path d="M2 3v15M18 3v15" stroke="#333" stroke-width="1.2"/><path d="M3 7h14" stroke="#e8e000" stroke-width="2"/><path d="M3 7l3-2v4zM17 7l-3-2v4z" fill="#333"/></svg>
<svg class="a" style="left:21px;top:287px" width="6" height="4" viewBox="0 0 6 4"><path d="M0 0h6L3 3z" fill="#000"/></svg>
<svg class="a" style="left:48px;top:287px" width="6" height="4" viewBox="0 0 6 4"><path d="M0 0h6L3 3z" fill="#000"/></svg>
<svg class="a" style="left:7px;top:315px" width="20" height="20" viewBox="0 0 20 20"><path d="M4 6h12l-2 13H6z" fill="#9ad0e8" stroke="#667" stroke-width=".8"/><rect x="3" y="4" width="14" height="2" fill="#aac" stroke="#667" stroke-width=".5"/><path d="M8 1l2 3 2-3" fill="#e8d000"/><path d="M7 9l6 6M13 9l-6 6" stroke="#e8e040" stroke-width=".8"/></svg>
<svg class="a" style="left:34px;top:315px" width="20" height="20" viewBox="0 0 20 20"><path d="M15 18a6 6 0 0 0-3-11H8V3L2 9l6 6v-4h4a3 3 0 0 1 3 7" fill="#a8a8a8" stroke="#888" stroke-width=".5"/></svg>
<svg class="a" style="left:21px;top:313px" width="6" height="4" viewBox="0 0 6 4"><path d="M0 0h6L3 3z" fill="#000"/></svg>
<svg class="a" style="left:48px;top:313px" width="6" height="4" viewBox="0 0 6 4"><path d="M0 0h6L3 3z" fill="#000"/></svg>
<svg class="a" style="left:7px;top:341px" width="20" height="20" viewBox="0 0 20 20"><path d="M2 1v18M5 1v18" stroke="#444" stroke-width="1.2"/><circle cx="11" cy="10" r="6" fill="none" stroke="#f08020" stroke-width="2"/><path d="M11 2v16M3 10h16M5 4l12 12M17 4L5 16" stroke="#f08020" stroke-width="1.4"/><path d="M1 17l8-3 10 3" stroke="#f8a040" stroke-width="2" fill="none"/></svg>
<svg class="a" style="left:34px;top:341px" width="20" height="20" viewBox="0 0 20 20"><path d="M1 4h6l2 2h6v7H1z" fill="#f0d070" stroke="#a08030" stroke-width=".7"/><path d="M5 3l6-2v5" stroke="#3a3" stroke-width="2" fill="none"/><rect x="6" y="10" width="13" height="9" fill="#fff" stroke="#333" stroke-width="1"/></svg>
<svg class="a" style="left:21px;top:339px" width="6" height="4" viewBox="0 0 6 4"><path d="M0 0h6L3 3z" fill="#000"/></svg>
<svg class="a" style="left:48px;top:339px" width="6" height="4" viewBox="0 0 6 4"><path d="M0 0h6L3 3z" fill="#000"/></svg>
<div class="a" style="left:60px;top:109px;width:1860px;height:892px;background:linear-gradient(#00001a 0%,#111b3a 25%,#243253 50%,#354c72 75%,#47638c 100%)"></div>
<svg class="a" style="left:0;top:0" width="1920" height="1048" viewBox="0 0 1920 1048"><defs>
<pattern id="hatch" width="20" height="5" patternUnits="userSpaceOnUse" patternTransform="rotate(-5)">
<rect width="20" height="5" fill="#000"/><path d="M0 1.2h9l2 1h7M7 3.7h9l2 .8h2M0 4.5h2" stroke="#e0e0ea" stroke-width="1" fill="none"/></pattern>
<pattern id="vhatch" width="4" height="14" patternUnits="userSpaceOnUse" patternTransform="rotate(-5)">
<rect width="4" height="14" fill="#000"/><path d="M1.2 1v8M3 6v8" stroke="#c8c8d4" stroke-width=".8"/></pattern>
</defs><polygon points="980,109 993,109 996,176 986,178 982,150" fill="#a4a5b6" stroke="#000" stroke-width="1.6" stroke-linejoin="round"/><path d="M983 115l4 55" stroke="#90c890" stroke-width=".7"/><path d="M979 145h5v12h-5z" fill="#c8c8d0" stroke="#000" stroke-width=".8"/><polygon points="981,193 996,192 1003,262 990,263 987,220 982,218" fill="#a4a5b6" stroke="#000" stroke-width="1.6" stroke-linejoin="round"/><path d="M985 200l5 58" stroke="#90c890" stroke-width=".7"/><path d="M982 196h6v14h-6zM982 240h8v5h-8zM986 252h5v8h-5z" fill="#b8b8c8" stroke="#000" stroke-width=".8"/><polygon points="989,268 1002,266 1006,294 991,295" fill="#a4a5b6" stroke="#000" stroke-width="1.6" stroke-linejoin="round"/><polygon points="984,281 992,280 993,293 985,294" fill="#a4a5b6" stroke="#000" stroke-width="1" stroke-linejoin="round"/><polygon points="990,109 999,109 1038,305 1004,309" fill="#00c832" stroke="#000" stroke-width="1.2" stroke-linejoin="round"/><path d="M995 109L1010 306" stroke="#000" stroke-width=".8"/><polygon points="752,158 760,158 760,170 752,170" fill="#e07b70" stroke="#000" stroke-width="0.8" stroke-linejoin="round"/><polygon points="759,152 764,152 766,176 761,176" fill="#e8d820" stroke="#000" stroke-width="0.8" stroke-linejoin="round"/><polygon points="758,212 768,212 769,232 759,232" fill="#d010d8" stroke="#000" stroke-width="0.8" stroke-linejoin="round"/><polygon points="761,273 770,273 770,283 761,283" fill="#e07b70" stroke="#000" stroke-width="0.8" stroke-linejoin="round"/><polygon points="768,266 773,266 775,291 770,291" fill="#e8d820" stroke="#000" stroke-width="0.8" stroke-linejoin="round"/><polygon points="762,148 774,148 779,158 793,285 875,282 890,290 891,303 777,313 772,292" fill="#6f7284" stroke="#000" stroke-width="1.2" stroke-linejoin="round"/><path d="M774 148L791 300M780 160L796 288" stroke="#000" stroke-width=".8" fill="none"/><polygon points="779,158 791,287 800,300 889,292 875,282 793,285" fill="#8a8c9c" stroke="#000" stroke-width="0.6" stroke-linejoin="round"/><polygon points="785,147 798,146 800,170 788,172" fill="#a2d6a6" stroke="#000" stroke-width="1" stroke-linejoin="round"/><polygon points="788,172 799,170 807,286 797,288" fill="#a2d6a6" stroke="#000" stroke-width="1" stroke-linejoin="round"/><polygon points="797,256 806,256 808,286 799,288" fill="#a2d6a6" stroke="#000" stroke-width="1" stroke-linejoin="round"/><polygon points="798,146 826,148 826,153 815,155 815,170 800,172" fill="#a4a5b6" stroke="#000" stroke-width="1" stroke-linejoin="round"/><polygon points="813,163 821,163 821,172 813,172" fill="#a4a5b6" stroke="#000" stroke-width="0.8" stroke-linejoin="round"/><polygon points="803,245 812,245 818,256 818,290 807,290" fill="#a4a5b6" stroke="#000" stroke-width="1" stroke-linejoin="round"/><polygon points="812,265 818,265 818,275 812,275" fill="#a4a5b6" stroke="#000" stroke-width="0.8" stroke-linejoin="round"/><polygon points="781,156 786,156 787,168 782,168" fill="#e07b70" stroke="#000" stroke-width="0.7" stroke-linejoin="round"/><polygon points="789,272 795,272 795,283 789,283" fill="#e07b70" stroke="#000" stroke-width="0.7" stroke-linejoin="round"/><polygon points="796,292 876,284 888,291 800,300" fill="#8c8ea0" stroke="#000" stroke-width="0.7" stroke-linejoin="round"/><polygon points="706,323 790,314 905,303 912,312 966,318 711,342 706,342" fill="url(#hatch)" stroke="#000" stroke-width="1.2" stroke-linejoin="round"/><polygon points="905,312 1003,304 1006,311 966,318 905,323" fill="#c4c4cc" stroke="#000" stroke-width="1" stroke-linejoin="round"/><path d="M907 314.5L1000 306.5M907 318.5L990 311.5" stroke="#111" stroke-width="1"/><path d="M910 316.5L998 309M912 320.5L960 316.5" stroke="#f4f4f8" stroke-width="1" stroke-dasharray="12 3"/><path d="M712 337L966 315" stroke="#c0c0cc" stroke-width="1.5"/><path d="M711 341L966 319" stroke="#000" stroke-width="2.5"/><polygon points="784,312 885,303 885,319 784,330" fill="url(#hatch)" stroke="#000" stroke-width="1" stroke-linejoin="round"/><polygon points="786,313 822,310 822,326 787,329" fill="#a4a5b6" stroke="#000" stroke-width="0.8" stroke-linejoin="round"/><polygon points="843,308 884,304 884,318 844,322" fill="#a4a5b6" stroke="#000" stroke-width="0.8" stroke-linejoin="round"/><path d="M795 313v16M836 309v15M852 308v14M870 306v14" stroke="#000" stroke-width=".8"/><polygon points="711,342 965,319 968,357 775,590 733,592" fill="#cd75d5" stroke="#000" stroke-width="1.5" stroke-linejoin="round"/><path d="M790 361Q803 362 801.5 372Q801 378 791 386Q780 394 776 400Q768 414 762 422Q752 426 745 417Q744 405 750 396Q760 378 772 370Q782 362 790 361Z" fill="#cfcfd1" stroke="#000" stroke-width="1.3"/><path d="M826 366Q823 362 828 361L870 358Q875 358 875 363L876 384Q876 392 870 388Q850 372 830 372Q824 371 826 366Z" fill="#1b2444" stroke="#000" stroke-width="1.3" stroke-linejoin="round"/><path d="M826 366Q823 362 828 361L870 358Q875 358 875 363L875 366L832 372Q825 372 826 366Z" fill="#cfcfd1" stroke="#000" stroke-width="1" stroke-linejoin="round"/><path d="M903 357L929 354Q935 354 932 359L910 387Q906 391 904 386L900 362Q899 357 903 357Z" fill="#1b2444" stroke="#000" stroke-width="1.3" stroke-linejoin="round"/><path d="M903 357L929 354Q935 354 932 359L930 362L904 366L901 362Q899 357 903 357Z" fill="#cfcfd1" stroke="#000" stroke-width="1" stroke-linejoin="round"/><path d="M754 451Q753 446 758 447Q762 448 764 452L787 488Q789 494 783 494L762 495Q757 495 756 490Z" fill="#1b2444" stroke="#000" stroke-width="1.3" stroke-linejoin="round"/><path d="M754 451Q753 446 758 447Q762 448 764 452L765 494L762 495Q757 495 756 490Z" fill="#cfcfd1" stroke="#000" stroke-width="1" stroke-linejoin="round"/><path d="M766 538L772 538L770 540Z" fill="#cfcfd1"/><rect x="765" y="474" width="4" height="6" fill="#cfcfd1" stroke="#000" stroke-width=".6"/><path d="M763 523L791 519Q796 519 793 524L770 553Q766 557 765 552L760 528Q759 523 763 523Z" fill="#1b2444" stroke="#000" stroke-width="1.3" stroke-linejoin="round"/><path d="M763 523L768 522L770 554Q766 557 765 552L760 528Q759 523 763 523Z" fill="#cfcfd1" stroke="#000" stroke-width="1" stroke-linejoin="round"/><circle cx="827" cy="438" r="50" fill="none" stroke="#000" stroke-width="1.2"/><circle cx="827" cy="438" r="25" fill="none" stroke="#000" stroke-width="1.2"/><circle cx="827" cy="438" r="17" fill="#1b2444" stroke="#000" stroke-width="1.2"/><circle cx="734" cy="349" r="2.6" fill="#222" stroke="#000" stroke-width=".5"/><circle cx="722.5" cy="362" r="2.6" fill="#222" stroke="#000" stroke-width=".5"/><circle cx="809" cy="341.6" r="2.6" fill="#222" stroke="#000" stroke-width=".5"/><circle cx="810.6" cy="361" r="2.6" fill="#222" stroke="#000" stroke-width=".5"/><circle cx="884" cy="335" r="2.6" fill="#222" stroke="#000" stroke-width=".5"/><circle cx="885" cy="355" r="2.6" fill="#222" stroke="#000" stroke-width=".5"/><circle cx="906" cy="343" r="2.6" fill="#222" stroke="#000" stroke-width=".5"/><circle cx="958" cy="328.4" r="2.6" fill="#222" stroke="#000" stroke-width=".5"/><circle cx="960" cy="348" r="2.6" fill="#222" stroke="#000" stroke-width=".5"/><circle cx="729" cy="437" r="2.6" fill="#222" stroke="#000" stroke-width=".5"/><circle cx="749" cy="435" r="2.6" fill="#222" stroke="#000" stroke-width=".5"/><circle cx="736" cy="511" r="2.6" fill="#222" stroke="#000" stroke-width=".5"/><circle cx="755" cy="509" r="2.6" fill="#222" stroke="#000" stroke-width=".5"/><circle cx="747" cy="531" r="2.6" fill="#222" stroke="#000" stroke-width=".5"/><circle cx="741.5" cy="584" r="2.6" fill="#222" stroke="#000" stroke-width=".5"/><circle cx="762" cy="583" r="2.6" fill="#222" stroke="#000" stroke-width=".5"/><circle cx="866.9" cy="435.2" r="2.9" fill="#1b2444" stroke="#000" stroke-width=".8"/><circle cx="863.0" cy="455.5" r="2.9" fill="#1b2444" stroke="#000" stroke-width=".8"/><circle cx="849.4" cy="471.2" r="2.9" fill="#1b2444" stroke="#000" stroke-width=".8"/><circle cx="829.8" cy="477.9" r="2.9" fill="#1b2444" stroke="#000" stroke-width=".8"/><circle cx="809.5" cy="474.0" r="2.9" fill="#1b2444" stroke="#000" stroke-width=".8"/><circle cx="793.8" cy="460.4" r="2.9" fill="#1b2444" stroke="#000" stroke-width=".8"/><circle cx="787.1" cy="440.8" r="2.9" fill="#1b2444" stroke="#000" stroke-width=".8"/><circle cx="791.0" cy="420.5" r="2.9" fill="#1b2444" stroke="#000" stroke-width=".8"/><circle cx="804.6" cy="404.8" r="2.9" fill="#1b2444" stroke="#000" stroke-width=".8"/><circle cx="824.2" cy="398.1" r="2.9" fill="#1b2444" stroke="#000" stroke-width=".8"/><circle cx="844.5" cy="402.0" r="2.9" fill="#1b2444" stroke="#000" stroke-width=".8"/><circle cx="860.2" cy="415.6" r="2.9" fill="#1b2444" stroke="#000" stroke-width=".8"/><polygon points="966,317.5 1040,307 1040,301 1050,300 1050,307 1054,349.6 968.7,357" fill="#d0d0d2" stroke="#000" stroke-width="1.2" stroke-linejoin="round"/><path d="M974 338q-3-8 6-10l42-7q12-1 12 7q0 7-10 9l-44 8q-5 1-6-7z" fill="#cfcfd1" stroke="#000" stroke-width="1.3"/><path d="M974 338q-2-7 6-9l30-5 1 19-29 5q-6 1-8-10z" fill="#000"/><path d="M1012 325l12-2q7 0 7 5q0 5-8 7l-10 1z" fill="#1b2444" stroke="#000" stroke-width="1"/><polygon points="976,332 1010,326 1011,333 977,339" fill="#9a9aa0" stroke="#000" stroke-width="0.5" stroke-linejoin="round"/><path d="M979 342L1009 337M982 331L1008 327" stroke="#b0b0b4" stroke-width="1"/><polygon points="995,329 1004,327 1006,335 997,337" fill="#b0b0b4" stroke="#000" stroke-width="0.6" stroke-linejoin="round"/><polygon points="705,336 711,341 723,469 716,469" fill="#000" stroke="#000" stroke-width="0.5" stroke-linejoin="round"/><path d="M710 352l.6 6M711.5 368l.6 6M713 384l.6 6M714.5 400l.6 6M716 416l.6 6M717.5 432l.6 6M719 448l.6 6" stroke="#ddd" stroke-width=".8"/><polygon points="707,469 721,469 733,592 740,676 726,676" fill="url(#vhatch)" stroke="#000" stroke-width="1" stroke-linejoin="round"/><path d="M697 535l6 100M704 532l9 106" stroke="#000" stroke-width=".7"/><path d="M700 532l8 100" stroke="#000" stroke-width=".7"/><polygon points="719,470 723,470 739,676 734,676" fill="#b4b6c6" stroke="#000" stroke-width="0.8" stroke-linejoin="round"/><polygon points="709,536 725,535 729,575 712,576" fill="#a6a8ba" stroke="#000" stroke-width="1.2" stroke-linejoin="round"/><polygon points="710,576 728,575 730,595 711,596" fill="#181820" stroke="#000" stroke-width="0.6" stroke-linejoin="round"/><path d="M716 580v12M722 579v12" stroke="#c8c8d0" stroke-width=".8"/><polygon points="711,596 729,595 733,640 714,641" fill="#a6a8ba" stroke="#000" stroke-width="1.2" stroke-linejoin="round"/><path d="M711 540h14M713 590h16" stroke="#000" stroke-width=".8"/><polygon points="733,593 773,590 780,673 740,677" fill="#d0d0d2" stroke="#000" stroke-width="1.2" stroke-linejoin="round"/><path d="M744 594l21-1 1 40q-1 6-11 6q-9 0-10-6z" fill="none" stroke="#000" stroke-width="1"/><path d="M746 611h12l1 20q0 3-6 3t-6-3z" fill="#1b2444" stroke="#000" stroke-width="1"/><polygon points="745,596 758,595 759,611 746,612" fill="#a4a5b6" stroke="#000" stroke-width="0.8" stroke-linejoin="round"/><polygon points="498,396 503,389 706,347 712,383 506,403 499,404" fill="#00c832" stroke="#000" stroke-width="1.2" stroke-linejoin="round"/><path d="M503 393L704 352M508 399L708 377" stroke="#000" stroke-width=".8"/><polygon points="498,399 696,383 697,404 515,421 503,422" fill="#15151c" stroke="#000" stroke-width="1" stroke-linejoin="round"/><polygon points="498,399 515,398 516,420 503,421" fill="#c8c8d0" stroke="#000" stroke-width="1" stroke-linejoin="round"/><polygon points="515,398 696,383 696,392 515,407" fill="#c4c4cc" stroke="#000" stroke-width="0.8" stroke-linejoin="round"/><polygon points="678,386 696,384 697,403 679,404" fill="#c8c8d0" stroke="#000" stroke-width="0.8" stroke-linejoin="round"/><polygon points="598,391 616,389 616,397 598,399" fill="#c8c8d0" stroke="#000" stroke-width="0.6" stroke-linejoin="round"/><path d="M520 404L690 390" stroke="#a8d8a8" stroke-width=".8" stroke-dasharray="6 10"/><rect x="527" y="414" width="14" height="6" fill="#d010d8"/><rect x="552" y="410" width="10" height="8" fill="#d010d8"/><rect x="583" y="406" width="16" height="5" fill="#d010d8"/><rect x="610" y="401" width="12" height="5" fill="#d010d8"/><rect x="648" y="399" width="14" height="4" fill="#d010d8"/><rect x="540" y="405" width="8" height="4" fill="#d010d8"/><rect x="630" y="404" width="10" height="3" fill="#d010d8"/><rect x="560" y="413" width="30" height="2" fill="#c8c8d0"/><rect x="600" y="409" width="40" height="2" fill="#c8c8d0"/><rect x="520" y="418" width="20" height="2" fill="#c8c8d0"/><rect x="650" y="406" width="30" height="2" fill="#c8c8d0"/><polygon points="506,416 528,414 560,420 650,405 695,402 694,415 680,436 685,450 680,470 682,595 655,600 600,606 549,598 539,544 528,433 507,431" fill="#dede00" stroke="#000" stroke-width="1.2" stroke-linejoin="round"/><polygon points="528,433 545,430 563,596 549,598 539,544" fill="#d8d800" stroke="#000" stroke-width="0.8" stroke-linejoin="round"/><rect x="545.9" y="507.4" width="4.8" height="1.7" fill="#000"/><rect x="540.5" y="464.5" width="3.9" height="2.2" fill="#000"/><rect x="540.7" y="506.5" width="3.6" height="2.3" fill="#000"/><rect x="546.5" y="530.3" width="3.4" height="2.1" fill="#000"/><rect x="552.2" y="534.7" width="2.2" height="1.1" fill="#000"/><rect x="551.1" y="530.9" width="3.0" height="1.9" fill="#000"/><rect x="548.0" y="518.1" width="3.5" height="2.0" fill="#b8b8c0"/><rect x="547.7" y="539.8" width="3.7" height="2.4" fill="#000"/><rect x="547.5" y="548.2" width="2.7" height="1.4" fill="#000"/><rect x="542.4" y="525.1" width="2.3" height="1.4" fill="#000"/><rect x="558.4" y="588.3" width="2.0" height="1.3" fill="#000"/><rect x="551.2" y="510.2" width="3.2" height="1.1" fill="#000"/><rect x="548.3" y="559.6" width="2.3" height="1.5" fill="#b8b8c0"/><rect x="546.1" y="556.3" width="2.7" height="1.2" fill="#000"/><rect x="545.2" y="509.4" width="4.0" height="1.3" fill="#000"/><rect x="558.0" y="592.6" width="3.3" height="1.6" fill="#b8b8c0"/><rect x="541.1" y="502.3" width="2.8" height="2.5" fill="#000"/><rect x="549.2" y="594.7" width="2.6" height="2.5" fill="#000"/><rect x="533.5" y="441.7" width="3.3" height="1.0" fill="#000"/><rect x="550.6" y="567.8" width="2.2" height="1.3" fill="#000"/><rect x="535.7" y="437.5" width="3.9" height="1.2" fill="#b8b8c0"/><rect x="547.6" y="568.2" width="3.2" height="1.9" fill="#000"/><rect x="557.2" y="580.3" width="2.7" height="1.3" fill="#000"/><rect x="548.0" y="544.9" width="3.4" height="1.1" fill="#000"/><rect x="533.3" y="451.6" width="4.9" height="1.4" fill="#b8b8c0"/><rect x="545.5" y="476.1" width="3.8" height="1.4" fill="#000"/><rect x="559.5" y="583.7" width="2.4" height="1.7" fill="#000"/><rect x="547.1" y="479.8" width="2.6" height="1.0" fill="#000"/><rect x="541.4" y="500.8" width="2.1" height="1.4" fill="#000"/><rect x="534.3" y="449.8" width="3.4" height="1.5" fill="#000"/><rect x="552.7" y="529.4" width="3.4" height="1.5" fill="#000"/><rect x="548.6" y="589.0" width="3.9" height="1.7" fill="#000"/><rect x="548.7" y="486.0" width="2.2" height="1.8" fill="#000"/><rect x="556.0" y="579.0" width="4.1" height="2.2" fill="#000"/><rect x="545.6" y="491.3" width="4.7" height="2.3" fill="#b8b8c0"/><rect x="548.4" y="586.1" width="3.5" height="1.0" fill="#b8b8c0"/><rect x="538.0" y="495.7" width="2.2" height="1.1" fill="#000"/><rect x="559.4" y="593.9" width="4.2" height="1.6" fill="#b8b8c0"/><rect x="549.0" y="505.5" width="2.3" height="2.1" fill="#000"/><rect x="537.6" y="484.6" width="2.1" height="2.4" fill="#000"/><rect x="547.3" y="514.6" width="4.8" height="1.4" fill="#000"/><rect x="539.3" y="493.9" width="3.8" height="1.8" fill="#000"/><rect x="548.2" y="540.6" width="4.7" height="1.5" fill="#000"/><rect x="539.7" y="466.8" width="4.4" height="2.4" fill="#000"/><rect x="544.9" y="496.5" width="2.9" height="1.2" fill="#b8b8c0"/><path d="M533 440l16 150M540 438l16 152" stroke="#000" stroke-width=".8"/><polygon points="548,428 592,424 607,590 565,596" fill="#55550a" stroke="#000" stroke-width="1" stroke-linejoin="round"/><polygon points="630,420 670,416 674,588 643,592" fill="#55550a" stroke="#000" stroke-width="1" stroke-linejoin="round"/><rect x="550" y="430" width="28" height="44" rx="2" fill="#e4e400" stroke="#000" stroke-width="1"/><path d="M554 432v40" stroke="#ffff90" stroke-width="1.5"/><path d="M574 432v40" stroke="#7a7a00" stroke-width="1.2"/><rect x="555" y="478" width="27" height="47" rx="2" fill="#e4e400" stroke="#000" stroke-width="1"/><path d="M559 480v43" stroke="#ffff90" stroke-width="1.5"/><path d="M578 480v43" stroke="#7a7a00" stroke-width="1.2"/><rect x="560" y="529" width="28" height="59" rx="2" fill="#e4e400" stroke="#000" stroke-width="1"/><path d="M564 531v55" stroke="#ffff90" stroke-width="1.5"/><path d="M584 531v55" stroke="#7a7a00" stroke-width="1.2"/><rect x="649" y="420" width="20" height="52" rx="2" fill="#e4e400" stroke="#000" stroke-width="1"/><path d="M653 422v48" stroke="#ffff90" stroke-width="1.5"/><path d="M665 422v48" stroke="#7a7a00" stroke-width="1.2"/><rect x="652" y="476" width="20" height="58" rx="2" fill="#e4e400" stroke="#000" stroke-width="1"/><path d="M656 478v54" stroke="#ffff90" stroke-width="1.5"/><path d="M668 478v54" stroke="#7a7a00" stroke-width="1.2"/><rect x="656" y="538" width="18" height="49" rx="2" fill="#e4e400" stroke="#000" stroke-width="1"/><path d="M660 540v45" stroke="#ffff90" stroke-width="1.5"/><path d="M670 540v45" stroke="#7a7a00" stroke-width="1.2"/><polygon points="574,428 592,424 586,447 576,448" fill="#d010d8" stroke="#000" stroke-width="0.6" stroke-linejoin="round"/><polygon points="580,450 590,449 604,588 593,590" fill="#d010d8" stroke="#000" stroke-width="0.6" stroke-linejoin="round"/><polygon points="633,423 648,421 652,470 637,468" fill="#d010d8" stroke="#000" stroke-width="0.6" stroke-linejoin="round"/><polygon points="638,472 652,472 656,588 645,590" fill="#d010d8" stroke="#000" stroke-width="0.6" stroke-linejoin="round"/><circle cx="561" cy="455" r="4.5" fill="none" stroke="#000" stroke-width="1.3"/><circle cx="561" cy="455" r="1.8" fill="#000"/><circle cx="566" cy="502" r="5" fill="none" stroke="#000" stroke-width="1.3"/><circle cx="566" cy="502" r="2.0" fill="#000"/><circle cx="571" cy="550" r="4.5" fill="none" stroke="#000" stroke-width="1.3"/><circle cx="571" cy="550" r="1.8" fill="#000"/><circle cx="574" cy="572" r="3.5" fill="none" stroke="#000" stroke-width="1.3"/><circle cx="574" cy="572" r="1.4" fill="#000"/><circle cx="659" cy="448" r="4" fill="none" stroke="#000" stroke-width="1.3"/><circle cx="659" cy="448" r="1.6" fill="#000"/><circle cx="663" cy="505" r="5" fill="none" stroke="#000" stroke-width="1.3"/><circle cx="663" cy="505" r="2.0" fill="#000"/><circle cx="665" cy="560" r="4.5" fill="none" stroke="#000" stroke-width="1.3"/><circle cx="665" cy="560" r="1.8" fill="#000"/><circle cx="563" cy="440" r="3" fill="none" stroke="#000" stroke-width="1.3"/><circle cx="563" cy="440" r="1.2" fill="#000"/><circle cx="660" cy="432" r="3" fill="none" stroke="#000" stroke-width="1.3"/><circle cx="660" cy="432" r="1.2" fill="#000"/><circle cx="568" cy="515" r="3" fill="none" stroke="#000" stroke-width="1.3"/><circle cx="568" cy="515" r="1.2" fill="#000"/><circle cx="662" cy="525" r="3" fill="none" stroke="#000" stroke-width="1.3"/><circle cx="662" cy="525" r="1.2" fill="#000"/><rect x="556" y="476" width="24" height="3" fill="#d0d0d8" stroke="#000" stroke-width=".6"/><rect x="560" y="526" width="24" height="3" fill="#d0d0d8" stroke="#000" stroke-width=".6"/><rect x="640" y="470" width="22" height="3" fill="#d0d0d8" stroke="#000" stroke-width=".6"/><rect x="644" y="536" width="18" height="3" fill="#d0d0d8" stroke="#000" stroke-width=".6"/><rect x="553" y="430" width="20" height="3" fill="#d0d0d8" stroke="#000" stroke-width=".6"/><rect x="648" y="418" width="18" height="3" fill="#d0d0d8" stroke="#000" stroke-width=".6"/><path d="M552 474h40" stroke="#000" stroke-width="2" stroke-dasharray="3 2"/><path d="M552 524h40" stroke="#000" stroke-width="2" stroke-dasharray="3 2"/><path d="M595 452q-3-11 7-14q6-5 12 0q10 3 7 14q3 11-7 14q-6 5-12 0q-10-3-7-14z" fill="#181818" stroke="#000" stroke-width="1.2"/><path d="M605 441h9l-1 12h-7z" fill="#d010d8"/><circle cx="603" cy="455" r="5" fill="#c8c800" stroke="#000" stroke-width="1"/><circle cx="614" cy="458" r="3" fill="none" stroke="#e4e400" stroke-width="1"/><circle cx="608" cy="472" r="4" fill="none" stroke="#000" stroke-width="1.3"/><circle cx="608" cy="472" r="1.5" fill="#000"/><path d="M599 496q-3-11 7-14q6-5 12 0q10 3 7 14q3 11-7 14q-6 5-12 0q-10-3-7-14z" fill="#181818" stroke="#000" stroke-width="1.2"/><path d="M609 485h9l-1 12h-7z" fill="#d010d8"/><circle cx="607" cy="499" r="5" fill="#c8c800" stroke="#000" stroke-width="1"/><circle cx="618" cy="502" r="3" fill="none" stroke="#e4e400" stroke-width="1"/><circle cx="612" cy="516" r="4" fill="none" stroke="#000" stroke-width="1.3"/><circle cx="612" cy="516" r="1.5" fill="#000"/><path d="M604 542q-3-11 7-14q6-5 12 0q10 3 7 14q3 11-7 14q-6 5-12 0q-10-3-7-14z" fill="#181818" stroke="#000" stroke-width="1.2"/><path d="M614 531h9l-1 12h-7z" fill="#d010d8"/><circle cx="612" cy="545" r="5" fill="#c8c800" stroke="#000" stroke-width="1"/><circle cx="623" cy="548" r="3" fill="none" stroke="#e4e400" stroke-width="1"/><circle cx="617" cy="562" r="4" fill="none" stroke="#000" stroke-width="1.3"/><circle cx="617" cy="562" r="1.5" fill="#000"/><circle cx="516" cy="425" r="2.2" fill="#000"/><circle cx="535" cy="425" r="2.2" fill="#000"/><circle cx="598" cy="430" r="2.2" fill="#000"/><circle cx="618" cy="425" r="2.2" fill="#000"/><circle cx="680" cy="420" r="2.2" fill="#000"/><circle cx="688" cy="440" r="2.2" fill="#000"/><circle cx="545" cy="470" r="2.2" fill="#000"/><circle cx="676" cy="470" r="2.2" fill="#000"/><circle cx="684" cy="520" r="2.2" fill="#000"/><circle cx="678" cy="560" r="2.2" fill="#000"/><circle cx="600" cy="470" r="2.2" fill="#000"/><circle cx="625" cy="480" r="2.2" fill="#000"/><circle cx="605" cy="515" r="2.2" fill="#000"/><circle cx="628" cy="525" r="2.2" fill="#000"/><circle cx="592" cy="560" r="2.2" fill="#000"/><circle cx="630" cy="570" r="2.2" fill="#000"/><circle cx="645.9" cy="527.1" r="1.9" fill="#000"/><circle cx="670.0" cy="547.3" r="2.4" fill="none" stroke="#000" stroke-width=".9"/><rect x="633.7" y="582.3" width="2.3" height="2.9" fill="#d010d8"/><path d="M616.8 462.4l9.8 0.0" stroke="#000" stroke-width="1"/><rect x="565.5" y="490.2" width="3.2" height="3.5" fill="#d010d8"/><path d="M627.4 432.4l0.0 4.0" stroke="#000" stroke-width="1"/><circle cx="576.4" cy="569.9" r="3.5" fill="none" stroke="#000" stroke-width=".9"/><rect x="586.8" y="570.1" width="4.6" height="2" fill="#d0d0d8" stroke="#000" stroke-width=".4"/><rect x="572.9" y="536.6" width="5.1" height="2" fill="#d0d0d8" stroke="#000" stroke-width=".4"/><circle cx="664.8" cy="586.2" r="2.2" fill="none" stroke="#000" stroke-width=".9"/><circle cx="556.1" cy="448.5" r="2.1" fill="none" stroke="#000" stroke-width=".9"/><path d="M543.9 523.7l0.4 4.5" stroke="#000" stroke-width="1"/><path d="M582.7 481.1l0.0 7.8" stroke="#000" stroke-width="1"/><rect x="553.3" y="541.2" width="3.1" height="2" fill="#d0d0d8" stroke="#000" stroke-width=".4"/><circle cx="659.5" cy="549.0" r="3.1" fill="none" stroke="#000" stroke-width=".9"/><circle cx="622.5" cy="483.0" r="1.6" fill="none" stroke="#000" stroke-width=".9"/><circle cx="678.6" cy="451.1" r="3.0" fill="none" stroke="#000" stroke-width=".9"/><circle cx="671.2" cy="579.9" r="2.2" fill="none" stroke="#000" stroke-width=".9"/><circle cx="650.8" cy="510.2" r="3.0" fill="none" stroke="#000" stroke-width=".9"/><circle cx="661.3" cy="557.1" r="3.4" fill="none" stroke="#000" stroke-width=".9"/><path d="M584.9 435.7l0.0 6.7" stroke="#000" stroke-width="1"/><circle cx="620.3" cy="579.0" r="2.1" fill="none" stroke="#000" stroke-width=".9"/><circle cx="546.1" cy="450.5" r="2.9" fill="none" stroke="#000" stroke-width=".9"/><circle cx="572.3" cy="591.4" r="3.5" fill="none" stroke="#000" stroke-width=".9"/><circle cx="598.9" cy="511.8" r="2.7" fill="none" stroke="#000" stroke-width=".9"/><path d="M608.1 562.1l11.8 0.0" stroke="#000" stroke-width="1"/><circle cx="654.1" cy="529.8" r="1.9" fill="none" stroke="#000" stroke-width=".9"/><circle cx="623.0" cy="588.8" r="3.3" fill="none" stroke="#000" stroke-width=".9"/><circle cx="563.7" cy="491.2" r="1.6" fill="none" stroke="#000" stroke-width=".9"/><rect x="559.8" y="492.4" width="3.9" height="2.3" fill="#d010d8"/><path d="M676.7 509.8l0.7 7.8" stroke="#000" stroke-width="1"/><circle cx="596.4" cy="470.1" r="2.3" fill="none" stroke="#000" stroke-width=".9"/><path d="M673.0 590.0l10.9 1.0" stroke="#000" stroke-width="1"/><path d="M608.7 451.0l7.7 7.7" stroke="#000" stroke-width="1"/><circle cx="652.6" cy="482.1" r="1.7" fill="#000"/><circle cx="648.3" cy="534.2" r="2.9" fill="none" stroke="#000" stroke-width=".9"/><circle cx="608.4" cy="468.3" r="1.7" fill="#000"/><path d="M676.4 470.5l7.6 7.6" stroke="#000" stroke-width="1"/><circle cx="650.6" cy="501.6" r="2.0" fill="none" stroke="#000" stroke-width=".9"/><path d="M610.6 469.7l0.6 6.8" stroke="#000" stroke-width="1"/><circle cx="645.3" cy="530.8" r="1.4" fill="#000"/><path d="M662.4 565.0l1.0 11.6" stroke="#000" stroke-width="1"/><circle cx="616.1" cy="509.1" r="3.2" fill="none" stroke="#000" stroke-width=".9"/><path d="M611.7 581.2l5.4 0.5" stroke="#000" stroke-width="1"/><path d="M624.4 554.2l6.4 0.6" stroke="#000" stroke-width="1"/><circle cx="663.5" cy="515.2" r="3.5" fill="none" stroke="#000" stroke-width=".9"/><path d="M623.0 453.6l0.0 5.8" stroke="#000" stroke-width="1"/><circle cx="630.8" cy="538.0" r="2.4" fill="none" stroke="#000" stroke-width=".9"/><circle cx="543.5" cy="458.9" r="2.1" fill="none" stroke="#000" stroke-width=".9"/><circle cx="563.6" cy="451.2" r="2.4" fill="none" stroke="#000" stroke-width=".9"/><path d="M627.3 485.4l0.0 9.7" stroke="#000" stroke-width="1"/><rect x="589.4" y="484.3" width="5.6" height="2" fill="#d0d0d8" stroke="#000" stroke-width=".4"/><path d="M638.7 569.0l8.4 0.0" stroke="#000" stroke-width="1"/><path d="M580.5 471.8l4.5 4.5" stroke="#000" stroke-width="1"/><path d="M556.9 480.5l6.5 6.5" stroke="#000" stroke-width="1"/><path d="M559.1 483.5l5.5 5.5" stroke="#000" stroke-width="1"/><circle cx="554.8" cy="454.3" r="3.1" fill="none" stroke="#000" stroke-width=".9"/><circle cx="596.8" cy="533.8" r="3.3" fill="none" stroke="#000" stroke-width=".9"/><rect x="587.7" y="512.8" width="3.7" height="2.9" fill="#d010d8"/><path d="M614.0 588.0l7.0 0.6" stroke="#000" stroke-width="1"/><path d="M569.6 567.1l0.7 7.9" stroke="#000" stroke-width="1"/><rect x="585.3" y="491.5" width="4.5" height="2" fill="#d0d0d8" stroke="#000" stroke-width=".4"/><circle cx="607.1" cy="469.3" r="2.7" fill="none" stroke="#000" stroke-width=".9"/><circle cx="581.9" cy="496.3" r="1.8" fill="#000"/><circle cx="605.2" cy="422.3" r="3.4" fill="none" stroke="#000" stroke-width=".9"/><circle cx="579.9" cy="554.5" r="1.8" fill="none" stroke="#000" stroke-width=".9"/><path d="M588.8 590.1l8.1 0.7" stroke="#000" stroke-width="1"/><rect x="663.7" y="568.5" width="2.0" height="2.3" fill="#d010d8"/><path d="M641.3 468.6l3.0 3.0" stroke="#000" stroke-width="1"/><circle cx="637.5" cy="480.2" r="1.1" fill="#000"/><path d="M608.8 420.5l11.1 0.0" stroke="#000" stroke-width="1"/><circle cx="544.3" cy="513.8" r="1.4" fill="#000"/><path d="M641.3 519.0l10.8 0.9" stroke="#000" stroke-width="1"/><path d="M610.8 564.7l0.0 11.2" stroke="#000" stroke-width="1"/><circle cx="648.4" cy="500.0" r="1.5" fill="none" stroke="#000" stroke-width=".9"/><path d="M624.5 554.0l11.2 1.0" stroke="#000" stroke-width="1"/><path d="M606.4 444.5l11.7 1.0" stroke="#000" stroke-width="1"/><path d="M601.7 512.5l4.5 0.0" stroke="#000" stroke-width="1"/><circle cx="658.0" cy="459.6" r="1.7" fill="#000"/><rect x="638.3" y="424.4" width="6.0" height="2" fill="#d0d0d8" stroke="#000" stroke-width=".4"/><circle cx="552.2" cy="540.6" r="1.2" fill="#000"/><circle cx="674.7" cy="531.1" r="1.1" fill="#000"/><circle cx="672.3" cy="470.3" r="2.7" fill="none" stroke="#000" stroke-width=".9"/><path d="M562.6 491.2l8.4 0.0" stroke="#000" stroke-width="1"/><circle cx="646.4" cy="533.6" r="2.6" fill="none" stroke="#000" stroke-width=".9"/><path d="M594.0 440.4l7.5 0.0" stroke="#000" stroke-width="1"/><path d="M625.5 474.1l1.0 11.3" stroke="#000" stroke-width="1"/><path d="M578.4 443.8l4.5 4.5" stroke="#000" stroke-width="1"/><circle cx="621.0" cy="582.0" r="1.6" fill="none" stroke="#000" stroke-width=".9"/><circle cx="659.9" cy="460.5" r="3.5" fill="none" stroke="#000" stroke-width=".9"/><path d="M661.7 559.0l5.4 0.5" stroke="#000" stroke-width="1"/><circle cx="634.1" cy="542.7" r="2.8" fill="none" stroke="#000" stroke-width=".9"/><path d="M551.6 435.7l0.0 7.1" stroke="#000" stroke-width="1"/><circle cx="677.6" cy="499.6" r="2.6" fill="none" stroke="#000" stroke-width=".9"/><circle cx="596.0" cy="513.2" r="1.9" fill="#000"/><circle cx="653.7" cy="493.8" r="1.1" fill="#000"/><circle cx="613.3" cy="576.8" r="2.9" fill="none" stroke="#000" stroke-width=".9"/><circle cx="659.8" cy="484.6" r="3.4" fill="none" stroke="#000" stroke-width=".9"/><circle cx="653.1" cy="541.3" r="2.9" fill="none" stroke="#000" stroke-width=".9"/><path d="M581.3 481.6l0.7 8.1" stroke="#000" stroke-width="1"/><circle cx="622.6" cy="521.9" r="1.4" fill="#000"/><circle cx="537.7" cy="436.7" r="1.6" fill="none" stroke="#000" stroke-width=".9"/><circle cx="611.9" cy="573.0" r="1.0" fill="#000"/><path d="M667.1 500.9l6.6 0.6" stroke="#000" stroke-width="1"/><path d="M567.7 499.4l7.0 0.0" stroke="#000" stroke-width="1"/><circle cx="666.2" cy="486.3" r="2.0" fill="none" stroke="#000" stroke-width=".9"/><circle cx="560.4" cy="467.7" r="2.0" fill="none" stroke="#000" stroke-width=".9"/><rect x="545.4" y="502.9" width="3.1" height="3.9" fill="#d010d8"/><path d="M636.6 538.3l0.0 4.9" stroke="#000" stroke-width="1"/><path d="M584.5 535.0l0.0 4.3" stroke="#000" stroke-width="1"/><path d="M623.3 542.9l5.1 5.1" stroke="#000" stroke-width="1"/><circle cx="597.6" cy="587.5" r="2.4" fill="none" stroke="#000" stroke-width=".9"/><circle cx="644.9" cy="468.7" r="1.2" fill="#000"/><rect x="636.0" y="461.4" width="4.9" height="2" fill="#d0d0d8" stroke="#000" stroke-width=".4"/><circle cx="679.6" cy="494.1" r="1.6" fill="none" stroke="#000" stroke-width=".9"/><circle cx="601.7" cy="554.0" r="2.6" fill="none" stroke="#000" stroke-width=".9"/><circle cx="617.3" cy="590.2" r="1.7" fill="none" stroke="#000" stroke-width=".9"/><path d="M670.8 432.2l4.4 0.4" stroke="#000" stroke-width="1"/><circle cx="543.3" cy="461.9" r="1.6" fill="none" stroke="#000" stroke-width=".9"/><circle cx="596.6" cy="463.9" r="1.6" fill="none" stroke="#000" stroke-width=".9"/><circle cx="681.8" cy="426.5" r="2.5" fill="none" stroke="#000" stroke-width=".9"/><circle cx="615.8" cy="489.2" r="2.1" fill="none" stroke="#000" stroke-width=".9"/><rect x="615.9" y="438.6" width="3.8" height="3.7" fill="#d010d8"/><path d="M537.7 456.9l7.4 0.6" stroke="#000" stroke-width="1"/><circle cx="616.5" cy="552.1" r="1.5" fill="none" stroke="#000" stroke-width=".9"/><rect x="638.7" y="550.1" width="5.0" height="3.1" fill="#d010d8"/><circle cx="607.1" cy="443.9" r="1.3" fill="#000"/><path d="M558.3 489.2l5.9 0.5" stroke="#000" stroke-width="1"/><path d="M598.3 434.5l0.0 6.2" stroke="#000" stroke-width="1"/><circle cx="576.3" cy="504.7" r="1.8" fill="#000"/><circle cx="664.2" cy="571.8" r="3.0" fill="none" stroke="#000" stroke-width=".9"/><circle cx="650.2" cy="485.3" r="2.1" fill="none" stroke="#000" stroke-width=".9"/><circle cx="567.5" cy="581.7" r="1.8" fill="none" stroke="#000" stroke-width=".9"/><circle cx="651.2" cy="538.3" r="1.6" fill="none" stroke="#000" stroke-width=".9"/><circle cx="555.0" cy="493.5" r="1.6" fill="#000"/><circle cx="582.4" cy="475.3" r="2.5" fill="none" stroke="#000" stroke-width=".9"/><path d="M542.4 475.6l3.0 3.0" stroke="#000" stroke-width="1"/><circle cx="681.3" cy="440.9" r="1.4" fill="#000"/><circle cx="677.5" cy="464.4" r="2.6" fill="none" stroke="#000" stroke-width=".9"/><circle cx="563.9" cy="441.6" r="1.8" fill="none" stroke="#000" stroke-width=".9"/><rect x="566.3" y="526.5" width="3.8" height="2" fill="#d0d0d8" stroke="#000" stroke-width=".4"/><circle cx="630.6" cy="524.2" r="3.0" fill="none" stroke="#000" stroke-width=".9"/><circle cx="601.4" cy="494.7" r="2.4" fill="none" stroke="#000" stroke-width=".9"/><circle cx="624.6" cy="459.3" r="1.6" fill="none" stroke="#000" stroke-width=".9"/><path d="M566.7 534.9l8.7 0.8" stroke="#000" stroke-width="1"/><path d="M657.6 437.8l5.7 0.0" stroke="#000" stroke-width="1"/><circle cx="671.1" cy="420.2" r="2.9" fill="none" stroke="#000" stroke-width=".9"/><circle cx="605.8" cy="480.9" r="3.1" fill="none" stroke="#000" stroke-width=".9"/><circle cx="613.0" cy="472.2" r="1.8" fill="#000"/><circle cx="655.9" cy="483.1" r="1.7" fill="#000"/><path d="M558.0 576.2l0.4 5.1" stroke="#000" stroke-width="1"/><circle cx="612.7" cy="563.0" r="1.8" fill="none" stroke="#000" stroke-width=".9"/><rect x="642.8" y="437.0" width="2.6" height="3.6" fill="#d010d8"/><rect x="637.6" y="475.7" width="3.9" height="3.6" fill="#d010d8"/><path d="M540.1 484.7l6.3 6.3" stroke="#000" stroke-width="1"/><path d="M550.9 559.9l4.6 4.6" stroke="#000" stroke-width="1"/><circle cx="607.7" cy="485.8" r="1.4" fill="#000"/><rect x="654.8" y="589.0" width="4.1" height="3.3" fill="#d010d8"/><circle cx="654.0" cy="512.3" r="2.7" fill="none" stroke="#000" stroke-width=".9"/><circle cx="616.0" cy="536.9" r="1.7" fill="none" stroke="#000" stroke-width=".9"/><path d="M587.1 435.0l6.4 0.6" stroke="#000" stroke-width="1"/><circle cx="585.7" cy="579.8" r="1.1" fill="#000"/><rect x="636.2" y="549.6" width="5.7" height="2" fill="#d0d0d8" stroke="#000" stroke-width=".4"/><circle cx="658.9" cy="538.3" r="1.6" fill="#000"/><rect x="612.6" y="455.9" width="2.7" height="3.9" fill="#d010d8"/><circle cx="597.2" cy="513.6" r="2.3" fill="none" stroke="#000" stroke-width=".9"/><rect x="633.0" y="450.6" width="4.7" height="3.2" fill="#d010d8"/><path d="M554.6 486.5l6.7 6.7" stroke="#000" stroke-width="1"/><circle cx="583.2" cy="589.2" r="2.1" fill="none" stroke="#000" stroke-width=".9"/><circle cx="653.0" cy="557.2" r="3.4" fill="none" stroke="#000" stroke-width=".9"/><circle cx="595.8" cy="433.2" r="2.8" fill="none" stroke="#000" stroke-width=".9"/><path d="M629.9 518.0l6.9 6.9" stroke="#000" stroke-width="1"/><path d="M600.6 491.7l0.0 6.4" stroke="#000" stroke-width="1"/><rect x="626.1" y="468.3" width="3.6" height="2" fill="#d0d0d8" stroke="#000" stroke-width=".4"/><path d="M532.2 425.2l6.0 6.0" stroke="#000" stroke-width="1"/><circle cx="586.6" cy="494.6" r="3.1" fill="none" stroke="#000" stroke-width=".9"/><rect x="548.8" y="476.8" width="3.4" height="2" fill="#d0d0d8" stroke="#000" stroke-width=".4"/><circle cx="551.9" cy="509.3" r="2.4" fill="none" stroke="#000" stroke-width=".9"/><rect x="669.4" y="486.1" width="3.8" height="3.6" fill="#d010d8"/><path d="M548.8 564.5l4.7 0.0" stroke="#000" stroke-width="1"/><circle cx="627.3" cy="446.1" r="3.0" fill="none" stroke="#000" stroke-width=".9"/><circle cx="655.8" cy="546.6" r="1.7" fill="#000"/><path d="M673.2 578.9l6.9 0.0" stroke="#000" stroke-width="1"/><circle cx="573.7" cy="560.0" r="1.8" fill="none" stroke="#000" stroke-width=".9"/><circle cx="677.4" cy="573.2" r="1.2" fill="#000"/><circle cx="610.3" cy="581.9" r="3.5" fill="none" stroke="#000" stroke-width=".9"/><circle cx="568.1" cy="585.5" r="2.3" fill="none" stroke="#000" stroke-width=".9"/><path d="M646.3 478.9l0.4 4.1" stroke="#000" stroke-width="1"/><circle cx="679.6" cy="559.2" r="1.2" fill="#000"/><rect x="558.6" y="479.1" width="3.9" height="3.5" fill="#d010d8"/><path d="M549.3 435.2l8.2 0.0" stroke="#000" stroke-width="1"/><circle cx="585.5" cy="428.7" r="2.8" fill="none" stroke="#000" stroke-width=".9"/><circle cx="573.9" cy="432.6" r="2.5" fill="none" stroke="#000" stroke-width=".9"/><circle cx="620.1" cy="589.4" r="3.4" fill="none" stroke="#000" stroke-width=".9"/><circle cx="587.2" cy="435.8" r="1.0" fill="#000"/><circle cx="595.0" cy="551.7" r="2.0" fill="none" stroke="#000" stroke-width=".9"/><path d="M594.9 498.8l11.8 0.0" stroke="#000" stroke-width="1"/><circle cx="655.7" cy="453.3" r="2.5" fill="none" stroke="#000" stroke-width=".9"/><circle cx="627.3" cy="584.5" r="1.5" fill="#000"/><circle cx="540.0" cy="423.9" r="1.5" fill="#000"/><path d="M671.4 567.9l6.4 6.4" stroke="#000" stroke-width="1"/><circle cx="516.2" cy="426.2" r="1.4" fill="#000"/><rect x="656.5" y="570.4" width="3.1" height="4.0" fill="#d010d8"/><circle cx="665.8" cy="550.1" r="3.1" fill="none" stroke="#000" stroke-width=".9"/><rect x="679.2" y="492.6" width="3.7" height="2" fill="#d0d0d8" stroke="#000" stroke-width=".4"/><path d="M578.5 492.5l0.4 4.0" stroke="#000" stroke-width="1"/><circle cx="649.7" cy="528.9" r="1.1" fill="#000"/><path d="M550.1 538.2l0.0 5.6" stroke="#000" stroke-width="1"/><rect x="656.9" y="423.2" width="4.8" height="2" fill="#d0d0d8" stroke="#000" stroke-width=".4"/><rect x="569.5" y="443.4" width="4.8" height="2.1" fill="#d010d8"/><circle cx="599.2" cy="451.8" r="3.0" fill="none" stroke="#000" stroke-width=".9"/><circle cx="651.0" cy="484.1" r="2.5" fill="none" stroke="#000" stroke-width=".9"/><circle cx="640.5" cy="587.7" r="1.7" fill="none" stroke="#000" stroke-width=".9"/><circle cx="595.7" cy="530.7" r="2.5" fill="none" stroke="#000" stroke-width=".9"/><circle cx="677.0" cy="520.1" r="2.6" fill="none" stroke="#000" stroke-width=".9"/><circle cx="617.1" cy="465.2" r="1.1" fill="#000"/><circle cx="641.0" cy="502.8" r="3.0" fill="none" stroke="#000" stroke-width=".9"/><path d="M612.0 492.0l0.4 4.4" stroke="#000" stroke-width="1"/><circle cx="546.7" cy="506.1" r="2.2" fill="none" stroke="#000" stroke-width=".9"/><path d="M564.1 423.7l11.4 0.0" stroke="#000" stroke-width="1"/><circle cx="615.4" cy="483.7" r="1.9" fill="#000"/><circle cx="676.9" cy="583.3" r="1.8" fill="none" stroke="#000" stroke-width=".9"/><path d="M560.4 580.3l0.0 8.2" stroke="#000" stroke-width="1"/><circle cx="672.6" cy="486.9" r="2.6" fill="none" stroke="#000" stroke-width=".9"/><circle cx="566.4" cy="562.7" r="2.5" fill="none" stroke="#000" stroke-width=".9"/><path d="M571.5 517.3l9.9 0.0" stroke="#000" stroke-width="1"/><circle cx="668.4" cy="440.1" r="2.2" fill="none" stroke="#000" stroke-width=".9"/><circle cx="611.7" cy="560.2" r="1.7" fill="none" stroke="#000" stroke-width=".9"/><circle cx="539.6" cy="463.2" r="1.8" fill="none" stroke="#000" stroke-width=".9"/><path d="M640.4 555.7l11.3 1.0" stroke="#000" stroke-width="1"/><path d="M626.3 563.9l0.7 8.5" stroke="#000" stroke-width="1"/><circle cx="519.6" cy="421.7" r="1.5" fill="#000"/><path d="M554.4 569.9l7.3 0.0" stroke="#000" stroke-width="1"/><path d="M604.0 511.4l8.2 8.2" stroke="#000" stroke-width="1"/><path d="M542.7 439.1l4.3 0.0" stroke="#000" stroke-width="1"/><path d="M586.8 543.1l6.9 6.9" stroke="#000" stroke-width="1"/><circle cx="624.2" cy="431.9" r="1.1" fill="#000"/><circle cx="581.3" cy="549.8" r="1.5" fill="none" stroke="#000" stroke-width=".9"/><rect x="615.6" y="550.4" width="3.4" height="2.3" fill="#d010d8"/><rect x="574.6" y="457.2" width="3.6" height="2" fill="#d0d0d8" stroke="#000" stroke-width=".4"/><circle cx="586.7" cy="435.2" r="2.4" fill="none" stroke="#000" stroke-width=".9"/><circle cx="633.4" cy="526.9" r="1.8" fill="none" stroke="#000" stroke-width=".9"/><path d="M638.3 504.5l4.8 4.8" stroke="#000" stroke-width="1"/><path d="M587.9 422.9l5.9 5.9" stroke="#000" stroke-width="1"/><path d="M621.5 574.8l8.4 0.7" stroke="#000" stroke-width="1"/><path d="M582.6 463.2l0.0 6.1" stroke="#000" stroke-width="1"/><circle cx="667.8" cy="481.5" r="2.8" fill="none" stroke="#000" stroke-width=".9"/><circle cx="675.3" cy="530.2" r="3.0" fill="none" stroke="#000" stroke-width=".9"/><path d="M552.8 477.9l3.8 3.8" stroke="#000" stroke-width="1"/><circle cx="619.3" cy="553.5" r="2.2" fill="none" stroke="#000" stroke-width=".9"/><rect x="560.3" y="551.7" width="4.6" height="2.6" fill="#d010d8"/><rect x="586.6" y="470.3" width="4.2" height="2" fill="#d0d0d8" stroke="#000" stroke-width=".4"/><circle cx="524.0" cy="431.4" r="1.7" fill="none" stroke="#000" stroke-width=".9"/><path d="M674.8 546.8l7.3 0.6" stroke="#000" stroke-width="1"/><path d="M539.4 458.9l0.8 9.2" stroke="#000" stroke-width="1"/><circle cx="589.0" cy="537.2" r="1.7" fill="none" stroke="#000" stroke-width=".9"/><circle cx="563.3" cy="485.4" r="2.7" fill="none" stroke="#000" stroke-width=".9"/><path d="M633.1 436.4l7.5 0.7" stroke="#000" stroke-width="1"/><rect x="618.0" y="466.8" width="4.3" height="2" fill="#d0d0d8" stroke="#000" stroke-width=".4"/><rect x="612.3" y="456.0" width="3.1" height="3.3" fill="#d010d8"/><path d="M546 428l19 168M592 424l15 166M630 420l13 172M670 416l4 172" stroke="#000" stroke-width="1" fill="none"/><polygon points="566,575 608,570 610,588 570,592" fill="none" stroke="#000" stroke-width="1.3" stroke-linejoin="round"/><path d="M600 560q10-4 20 0v14h-20z" fill="none" stroke="#000" stroke-width="1.3"/><polygon points="636,566 672,562 676,588 648,592 640,580" fill="none" stroke="#000" stroke-width="1.3" stroke-linejoin="round"/><polygon points="650,572 670,570 672,586 652,588" fill="none" stroke="#000" stroke-width="1.1" stroke-linejoin="round"/><polygon points="553,596 640,590 641,606 576,612 556,612" fill="#d010d8" stroke="#000" stroke-width="1" stroke-linejoin="round"/><rect x="565" y="600" width="12" height="7" fill="none" stroke="#000" stroke-width="1.2"/><rect x="598" y="598" width="8" height="8" fill="none" stroke="#000" stroke-width="1.2"/><rect x="612" y="597" width="10" height="9" fill="none" stroke="#000" stroke-width="1.2"/><rect x="628" y="596" width="8" height="9" fill="none" stroke="#000" stroke-width="1.2"/><circle cx="606" cy="600" r="4" fill="#e040e0" stroke="#000" stroke-width="1"/><polygon points="628,592 650,590 648,604 640,609" fill="#dede00" stroke="#000" stroke-width="1" stroke-linejoin="round"/><polygon points="549,596 575,598 575,625 551,626" fill="#a4a5b6" stroke="#000" stroke-width="1" stroke-linejoin="round"/><polygon points="556,599 566,598 566,606 556,607" fill="#c8c8d0" stroke="#000" stroke-width="0.8" stroke-linejoin="round"/><polygon points="648,602 689,598 690,614 650,617" fill="#a4a5b6" stroke="#000" stroke-width="1" stroke-linejoin="round"/><path d="M670 600v15M678 599v15" stroke="#000" stroke-width=".8"/><polygon points="575,620 690,609 690,614 576,625" fill="#b8e0b8" stroke="#000" stroke-width="0.8" stroke-linejoin="round"/><polygon points="550,624 690,613 690,622 551,634" fill="#a2d6a6" stroke="#000" stroke-width="1" stroke-linejoin="round"/><path d="M576 625v10M668 615v9" stroke="#000" stroke-width=".8"/><ellipse cx="566" cy="638" rx="8" ry="3" fill="#e4d030" stroke="#000" stroke-width=".8"/><ellipse cx="680" cy="628" rx="8" ry="3" fill="#e4d030" stroke="#000" stroke-width=".8"/><polygon points="550,645 580,639 669,628 689,629 693,625 691,533 696,524 705,528 717,643 717,647 553,658" fill="#6f7284" stroke="#000" stroke-width="1.2" stroke-linejoin="round"/><path d="M556 649L700 637L697 533M700 637L714 640" stroke="#000" stroke-width=".8" fill="none"/><polygon points="562,658 572,657 572,666 562,667" fill="#e07b70" stroke="#000" stroke-width="0.7" stroke-linejoin="round"/><polygon points="678,647 687,646 687,654 678,655" fill="#e07b70" stroke="#000" stroke-width="0.7" stroke-linejoin="round"/><polygon points="615,652 632,651 632,659 615,660" fill="#d010d8" stroke="#000" stroke-width="0.7" stroke-linejoin="round"/>
<defs><linearGradient id="lg1" x1="0" y1="0" x2="0" y2="1"><stop offset="0" stop-color="#ec6a1c"/><stop offset="1" stop-color="#f7a81c"/></linearGradient></defs><g fill="url(#lg1)"><path d="M891 517L895 514L895 533Q901 537 909 538L909 540Q898 540 891 537Z"/><path d="M897 512L900 509L900 532Q904 535 910 536L910 538Q902 537 897 534Z"/><path d="M902 509L905 506L905 530Q908 533 911 534L911 536Q905 535 902 532Z"/><path d="M937 517 L933 514 L933 533 Q927 537 919 538 L919 540 Q930 540 937 537 Z"/><path d="M931 512 L928 509 L928 532 Q924 535 918 536 L918 538 Q926 537 931 534 Z"/><path d="M926 509 L923 506 L923 530 Q920 533 917 534 L917 536 Q923 535 926 532 Z"/><path d="M913 510Q904 513 904 521Q904 528 911 531L914 527Q909 524 909.5 519Q910 514 913 510Z"/><path d="M915 541Q923 535 923 527Q923 520 919 517L917 522Q918.5 527 915.5 531Q912 535 912 541Z"/><path d="M910 538Q914 541 918 538L918 541L910 541Z"/></g>
<text x="946" y="530" font-size="18.5" font-weight="500" fill="#f39028" font-family="Liberation Sans" textLength="83" lengthAdjust="spacingAndGlyphs">智造资料网</text>
<text x="947" y="538" font-size="5" fill="#f08a28" font-family="Liberation Sans" textLength="82" lengthAdjust="spacingAndGlyphs">INTELLIGENT MANUFACTURING DATA</text>
</svg>
<div class="btn" style="left:64px;top:113px"></div>
<svg class="a" style="left:66px;top:115px" width="20" height="20" viewBox="0 0 20 20"><rect x="1" y="3.5" width="18" height="3" rx="1.5" fill="#4a66a0" stroke="#6a80b0" stroke-width=".5"/><rect x="1" y="8.5" width="18" height="3" rx="1.5" fill="#4a66a0" stroke="#6a80b0" stroke-width=".5"/><rect x="1" y="13.5" width="18" height="3" rx="1.5" fill="#4a66a0" stroke="#6a80b0" stroke-width=".5"/></svg>
<div class="btn" style="left:92px;top:113px"></div>
<svg class="a" style="left:94px;top:115px" width="20" height="20" viewBox="0 0 20 20"><rect x="3" y="4" width="14" height="12" fill="#e0e8f8" stroke="#777" stroke-width="1"/><path d="M1 1h4v4H1zM15 1h4v4h-4zM1 15h4v4H1zM15 15h4v4h-4z" fill="#3c3"/></svg>
<div class="btn" style="left:120px;top:113px"></div>
<svg class="a" style="left:122px;top:115px" width="20" height="20" viewBox="0 0 20 20"><path d="M2 6h5M2 9h5M2 12h5" stroke="#aab" stroke-width="1"/><circle cx="11" cy="9" r="5" fill="#b8d0ec" stroke="#889" stroke-width="1.5"/><path d="M7 13l-4 5" stroke="#bbb" stroke-width="2.2"/></svg>
<div class="btn" style="left:148px;top:113px"></div>
<svg class="a" style="left:150px;top:115px" width="20" height="20" viewBox="0 0 20 20"><path d="M9 12V1" stroke="#2a6ae0" stroke-width="1.5"/><path d="M7 4l2-3 2 3z" fill="#2a6ae0"/><path d="M9 12l8-6" stroke="#3a3" stroke-width="1.5"/><path d="M9 12l7 6" stroke="#d22" stroke-width="1.5"/><path d="M2 12l7-5 9 5-9 5z" fill="none" stroke="#556" stroke-width=".5"/><circle cx="9" cy="12" r="1.3" fill="#ccc"/></svg>
<div class="btn" style="left:176px;top:113px"></div>
<svg class="a" style="left:178px;top:115px" width="20" height="20" viewBox="0 0 20 20"><path d="M10 1.3L19.3 4.7L10 8.7L1 4.7Z" fill="#3cc83c" stroke="#1a9a1a" stroke-width=".6"/><path d="M10 1.3L19.3 4.7L10 8.7L1 4.7ZM1 14L10 19.3M10 19.3L19.3 14M1 14L10 10M10 10L19.3 14M1 4.7L1 14M19.3 4.7L19.3 14M10 8.7L10 19.3" fill="none" stroke="#000" stroke-width="1.2" stroke-linejoin="round"/></svg>
<div class="btn" style="left:204px;top:113px"></div>
<svg class="a" style="left:206px;top:115px" width="20" height="20" viewBox="0 0 20 20"><path d="M10 10L19.3 14L10 19.3L1 14Z" fill="#3cc83c" stroke="#1a9a1a" stroke-width=".6"/><path d="M10 1.3L19.3 4.7L10 8.7L1 4.7ZM1 14L10 19.3M10 19.3L19.3 14M1 14L10 10M10 10L19.3 14M1 4.7L1 14M19.3 4.7L19.3 14M10 8.7L10 19.3M10 1.3L10 10" fill="none" stroke="#000" stroke-width="1.2" stroke-linejoin="round"/></svg>
<div class="btn" style="left:232px;top:113px"></div>
<svg class="a" style="left:234px;top:115px" width="20" height="20" viewBox="0 0 20 20"><path d="M1 4.7L10 8.7L10 19.3L1 14Z" fill="#3cc83c" stroke="#1a9a1a" stroke-width=".6"/><path d="M10 1.3L19.3 4.7L10 8.7L1 4.7ZM1 14L10 19.3M10 19.3L19.3 14M1 14L10 10M10 10L19.3 14M1 4.7L1 14M19.3 4.7L19.3 14M10 8.7L10 19.3" fill="none" stroke="#000" stroke-width="1.2" stroke-linejoin="round"/></svg>
<div class="btn" style="left:260px;top:113px"></div>
<svg class="a" style="left:262px;top:115px" width="20" height="20" viewBox="0 0 20 20"><path d="M10 8.7L19.3 4.7L19.3 14L10 19.3Z" fill="#3cc83c" stroke="#1a9a1a" stroke-width=".6"/><path d="M10 1.3L19.3 4.7L10 8.7L1 4.7ZM1 14L10 19.3M10 19.3L19.3 14M1 14L10 10M10 10L19.3 14M1 4.7L1 14M19.3 4.7L19.3 14M10 8.7L10 19.3" fill="none" stroke="#000" stroke-width="1.2" stroke-linejoin="round"/></svg>
<div class="btn" style="left:288px;top:113px"></div>
<svg class="a" style="left:290px;top:115px" width="20" height="20" viewBox="0 0 20 20"><path d="M1 4.7L10 1.3L10 10L1 14Z" fill="#3cc83c" stroke="#1a9a1a" stroke-width=".6"/><path d="M10 1.3L19.3 4.7L10 8.7L1 4.7ZM1 14L10 19.3M10 19.3L19.3 14M1 14L10 10M10 10L19.3 14M1 4.7L1 14M19.3 4.7L19.3 14M10 8.7L10 19.3" fill="none" stroke="#000" stroke-width="1.2" stroke-linejoin="round"/></svg>
<div class="btn" style="left:316px;top:113px"></div>
<svg class="a" style="left:318px;top:115px" width="20" height="20" viewBox="0 0 20 20"><path d="M10 1.3L19.3 4.7L19.3 14L10 10Z" fill="#3cc83c" stroke="#1a9a1a" stroke-width=".6"/><path d="M10 1.3L19.3 4.7L10 8.7L1 4.7ZM1 14L10 19.3M10 19.3L19.3 14M1 14L10 10M10 10L19.3 14M1 4.7L1 14M19.3 4.7L19.3 14M10 8.7L10 19.3" fill="none" stroke="#000" stroke-width="1.2" stroke-linejoin="round"/></svg>
<div class="btn" style="left:344px;top:113px"></div>
<svg class="a" style="left:346px;top:115px" width="20" height="20" viewBox="0 0 20 20"><path d="M10 1.3L19.3 4.7L10 8.7L1 4.7Z" fill="#70e070"/><path d="M1 4.7L10 8.7L10 19.3L1 14Z" fill="#38c038"/><path d="M10 8.7L19.3 4.7L19.3 14L10 19.3Z" fill="#28a828"/><path d="M10 1.3L19.3 4.7L19.3 14L10 19.3L1 14L1 4.7Z" fill="none" stroke="#1a901a" stroke-width=".8"/></svg>
<div class="btn" style="left:64px;top:141px"></div>
<svg class="a" style="left:66px;top:143px" width="20" height="20" viewBox="0 0 20 20"><path d="M5.5 4v12a4.5 2 0 0 0 9 0V4" fill="none" stroke="#333" stroke-width="1"/><ellipse cx="10" cy="4" rx="4.5" ry="2" fill="none" stroke="#333" stroke-width="1"/></svg>
<div class="btn" style="left:64px;top:169px"></div>
<svg class="a" style="left:66px;top:171px" width="20" height="20" viewBox="0 0 20 20"><path d="M5.5 4v12a4.5 2 0 0 0 9 0V4" fill="none" stroke="#333" stroke-width="1"/><ellipse cx="10" cy="4" rx="4.5" ry="2" fill="none" stroke="#333" stroke-width="1"/></svg>
<div class="btn" style="left:64px;top:197px;background:#a89a6a;border-color:#e8c870"></div>
<svg class="a" style="left:66px;top:199px" width="20" height="20" viewBox="0 0 20 20"><path d="M5.5 4v12a4.5 2 0 0 0 9 0V4" fill="#5a82c8" stroke="#223" stroke-width="1"/><ellipse cx="10" cy="4" rx="4.5" ry="2" fill="#7aa0e0" stroke="#223" stroke-width="1"/></svg>
<div class="btn" style="left:64px;top:225px"></div>
<svg class="a" style="left:66px;top:227px" width="20" height="20" viewBox="0 0 20 20"><path d="M5.5 4v12a4.5 2 0 0 0 9 0V4" fill="#d0dcf0" stroke="#333" stroke-width="1"/><ellipse cx="10" cy="4" rx="4.5" ry="2" fill="#e8eef8" stroke="#333" stroke-width="1"/></svg>
<div class="btn" style="left:64px;top:253px"></div>
<svg class="a" style="left:66px;top:255px" width="20" height="20" viewBox="0 0 20 20"><path d="M5.5 4v12a4.5 2 0 0 0 9 0V4" fill="none" stroke="#333" stroke-width="1"/><ellipse cx="10" cy="4" rx="4.5" ry="2" fill="none" stroke="#333" stroke-width="1"/><path d="M6 5l3 12M10 6l2 11M13 5l-2 12" stroke="#555" stroke-width=".7"/></svg>
<svg class="a" style="left:100px;top:850px" width="90" height="110" viewBox="0 0 90 110">
<path d="M18 65l8-1h10l1 22-17 2z" fill="#5a6d90" stroke="#c8c8d0" stroke-width="1"/>
<path d="M20 92l-5-75" stroke="#20d8e8" stroke-width="2.2"/><path d="M11 24l3-9 4 9z" fill="#20d8e8"/>
<path d="M21 92l45-5" stroke="#20c020" stroke-width="2.5"/><path d="M61 83l8 3-8 4z" fill="#20a020"/>
<path d="M23 92l15-1" stroke="#e8e000" stroke-width="1.5"/>
<circle cx="21" cy="93" r="3.5" fill="#d01818"/>
<path d="M18 90l6 6M24 90l-6 6" stroke="#eee" stroke-width=".8"/>
<text x="8" y="14" font-size="11" fill="#c8c8d0" font-family="Liberation Sans">Z</text>
<text x="71" y="90" font-size="11" fill="#e01818" font-family="Liberation Sans">Y</text>
</svg>
<div class="a" style="left:0;top:1001px;width:1920px;height:39px;background:#d5dbe9"></div>
<div class="a" style="left:1px;top:1019px;width:1918px;height:2px;background:#a4a6ae;border-bottom:1px solid #eef0f6"></div>
<div class="vsep" style="left:1337px;top:1003px;height:16px"></div>
<div class="a" style="left:1341px;top:1003px;width:131px;height:16px;background:#fff"></div>
<div class="vsep" style="left:1474px;top:1003px;height:16px"></div>
<div class="t" style="left:1485px;top:1005px;font-size:12px;color:#000">绝对 XY 上视图</div>
<div class="sl" style="left:1591px;top:1003px;height:16px"></div>
<div class="t" style="left:1600px;top:1005px;font-size:12px;color:#000">绝对视图</div>
<div class="vsep" style="left:1657px;top:1003px;height:16px"></div>
<div class="t" style="left:1668px;top:1005px;font-size:12.5px;color:#000;font-weight:bold">LAYER0</div>
<div class="sl" style="left:1726px;top:1003px;height:16px"></div>
<div class="sl" style="left:1757px;top:1003px;height:16px"></div>
<div class="sl" style="left:1799px;top:1003px;height:16px"></div>
<div class="sl" style="left:1842px;top:1003px;height:16px"></div>
<div class="sl" style="left:1885px;top:1003px;height:16px"></div>
<div class="a" style="left:1762px;top:1005px;width:32px;height:12px;background:#46608c"></div>
<div class="a" style="left:1805px;top:1005px;width:32px;height:12px;background:#46608c"></div>
<div class="a" style="left:1848px;top:1005px;width:32px;height:12px;background:#46608c"></div>
<svg class="a" style="left:1894px;top:1004px" width="14" height="14" viewBox="0 0 20 20"><circle cx="10" cy="10" r="9" fill="#2a50d0"/><path d="M4 5q4 2 3 6t5 5M12 2q3 4 1 7t4 4" stroke="#2ac02a" stroke-width="3" fill="none"/></svg>
<div class="sl" style="left:1132px;top:1023px;height:16px"></div>
<div class="sl" style="left:1175px;top:1023px;height:16px"></div>
<div class="sl" style="left:1206px;top:1023px;height:16px"></div>
<div class="sl" style="left:1237px;top:1023px;height:16px"></div>
<div class="sl" style="left:1268px;top:1023px;height:16px"></div>
<div class="sl" style="left:1299px;top:1023px;height:16px"></div>
<div class="sl" style="left:1330px;top:1023px;height:16px"></div>
<div class="sl" style="left:1361px;top:1023px;height:16px"></div>
<div class="sl" style="left:1392px;top:1023px;height:16px"></div>
<div class="sl" style="left:1423px;top:1023px;height:16px"></div>
<div class="sl" style="left:1454px;top:1023px;height:16px"></div>
<div class="sl" style="left:1580px;top:1023px;height:16px"></div>
<div class="sl" style="left:1654px;top:1023px;height:16px"></div>
<div class="t" style="left:1141px;top:1025px;font-size:12px;color:#000">拴牢</div>
<div class="a" style="left:1212px;top:1021px;width:18px;height:18px;background:#fbe59a;border:1px solid #e8c25a"></div>
<div class="a" style="left:1336px;top:1021px;width:18px;height:18px;background:#fbe59a;border:1px solid #e8c25a"></div>
<svg class="a" style="left:1182px;top:1022px" width="17" height="17" viewBox="0 0 20 20"><rect x="0.5" y="0.5" width="19" height="19" fill="#c0c4d4" stroke="#666" stroke-width="1"/><path d="M4 10a6 6 0 0 1 10-4l2-2v5h-5l2-2a4 4 0 0 0-7 3z" fill="#e88098"/><path d="M16 10a6 6 0 0 1-10 4l-2 2v-5h5l-2 2a4 4 0 0 0 7-3z" fill="#e88098"/></svg>
<svg class="a" style="left:1212px;top:1022px" width="17" height="17" viewBox="0 0 20 20"><path d="M3 3l6 2 6-3-2 6 4 4-6-1z" fill="#c050d0"/><circle cx="7" cy="7" r="3" fill="#f0e020"/><path d="M9 9l8 8M9 9v6l2-2" stroke="#888" stroke-width="2" fill="#ddd"/></svg>
<svg class="a" style="left:1246px;top:1022px" width="17" height="17" viewBox="0 0 20 20"><rect x="3" y="7" width="10" height="12" fill="#d8e4f4" stroke="#667" stroke-width=".8"/><path d="M3 8l7-6h8v5l-7 4z" fill="#e8b050" stroke="#a07030" stroke-width=".6"/><circle cx="6" cy="16" r="2" fill="none" stroke="#3a6ae0" stroke-width="1"/><circle cx="10" cy="16" r="2" fill="none" stroke="#3a6ae0" stroke-width="1"/></svg>
<svg class="a" style="left:1278px;top:1022px" width="17" height="17" viewBox="0 0 20 20"><text x="10" y="17" font-size="19" font-weight="bold" text-anchor="middle" fill="#4a7ad0" font-family="Liberation Sans">?</text><ellipse cx="10" cy="18.5" rx="5" ry="1.2" fill="#888" opacity=".6"/></svg>
<svg class="a" style="left:1305px;top:1022px" width="17" height="17" viewBox="0 0 20 20"><path d="M4 4l5-3 5 3v5l-5 3-5-3z" fill="#4a8ae8" stroke="#234" stroke-width=".5"/><path d="M10 11l5-3 5 3v6l-5 3-5-3z" fill="#8ab0c8" stroke="#222" stroke-width=".7"/><path d="M1 15h8M6 12l3 3-3 3" stroke="#e02020" stroke-width="1.8" fill="none"/></svg>
<svg class="a" style="left:1337px;top:1022px" width="17" height="17" viewBox="0 0 20 20"><path d="M2 5l8-3 8 3-8 3z" fill="#d040e0"/><path d="M2 5l8 3v11l-8-3z" fill="#8aa8a8" stroke="#2a5ab0" stroke-width="1"/><path d="M18 5l-8 3v11l8-3z" fill="#7a9898" stroke="#2a5ab0" stroke-width="1"/></svg>
<div class="t" style="left:1463px;top:1025px;font-size:12px;color:#000">Ls: 1.00 Ps: 1.00</div>
<div class="t" style="left:1589px;top:1025px;font-size:12px;color:#000">单位: 毫米</div>
<div class="t" style="left:1663px;top:1025px;font-size:12.5px;letter-spacing:0.23px">X = 11143.92 <span style="color:#e81010">Y =-03155.71</span> Z = 00000.00</div>
<div class="a" style="left:1359px;top:1009px;width:206px;height:23px;background:#fff;border:1px solid #c8c8c8"></div>
<svg class="a" style="left:1358px;top:1005px" width="30" height="28" viewBox="0 0 30 28"><g transform="rotate(-14 15 14)"><rect x="3" y="3" width="24" height="22" rx="5" fill="#ee5522"/><path d="M20 8.5q-5-3-9 0q-2.5 2.5 2 4.5t3.5 4.5q-3.5 3-9 0" stroke="#fff" stroke-width="3.6" fill="none" stroke-linecap="round"/></g></svg>
<svg class="a" style="left:1367px;top:1032px" width="20" height="8" viewBox="0 0 20 8"><rect x="1" y="0" width="13" height="6" fill="none" stroke="#888" stroke-width="1.5"/></svg>
<svg class="a" style="left:1400px;top:1032px" width="20" height="8" viewBox="0 0 20 8"><path d="M2 0a7 7 0 0 0 12 0" fill="none" stroke="#2a9a2a" stroke-width="2"/><circle cx="8" cy="1" r="1.5" fill="#3355aa"/></svg>
<svg class="a" style="left:1430px;top:1032px" width="20" height="8" viewBox="0 0 20 8"><rect x="1" y="0" width="8" height="6" fill="none" stroke="#999" stroke-width="1.2"/><rect x="10" y="0" width="8" height="6" fill="none" stroke="#999" stroke-width="1.2"/></svg>
<div class="t" style="left:1393px;top:1013px;font-size:14px;color:#2a78d8;font-weight:bold">中</div>
<div class="t" style="left:1415px;top:1011px;font-size:14px;color:#2a78d8;font-weight:bold">°,</div>
<svg class="a" style="left:1436px;top:1012px" width="120" height="17" viewBox="0 0 120 17"><circle cx="8" cy="8.5" r="7" fill="none" stroke="#2a78d8" stroke-width="1.6"/><circle cx="5.5" cy="6.5" r="1" fill="#2a78d8"/><circle cx="10.5" cy="6.5" r="1" fill="#2a78d8"/><path d="M4.5 10q3.5 3 7 0" stroke="#2a78d8" stroke-width="1.4" fill="none"/><rect x="27" y="1" width="7" height="11" rx="3.5" fill="#2a78d8"/><path d="M25 8a5.5 5.5 0 0 0 11 0M30.5 13.5v3" stroke="#2a78d8" stroke-width="1.4" fill="none"/><rect x="44" y="3" width="16" height="11" rx="1.5" fill="#2a78d8"/><path d="M46.5 6h11M46.5 8.5h11M48.5 11h7" stroke="#fff" stroke-width="1.1" stroke-dasharray="1.5 1"/><circle cx="72" cy="5" r="3.5" fill="#b8c4d4"/><path d="M66 15q6-9 12 0z" fill="#b8c4d4"/><path d="M89 2l4 2h4l4-2 3 4-3 2v8H92V8l-3-2z" fill="#2a78d8"/><rect x="111" y="2" width="6" height="6" fill="#2a78d8"/><rect x="111" y="9" width="6" height="6" fill="#2a78d8"/><rect x="118" y="9" width="6" height="6" fill="#2a78d8"/><rect x="118" y="2" width="6" height="6" fill="none" stroke="#2a78d8" stroke-width="1.5"/></svg>
<div class="a" style="left:0;top:1040px;width:1920px;height:8px;background:#202020"></div>
<div class="a" style="left:48px;top:1040px;width:344px;height:8px;background:#f0f0f0;border-top:1px solid #bbb"></div>
<div class="a" style="left:638px;top:1040px;width:48px;height:8px;background:#4e4e4e"></div>
<div class="t" style="left:1815px;top:1043px;font-size:12px;color:#fff">15:04</div>
<div class="a" style="left:1914px;top:1040px;width:1px;height:8px;background:#888"></div>
</body></html>
